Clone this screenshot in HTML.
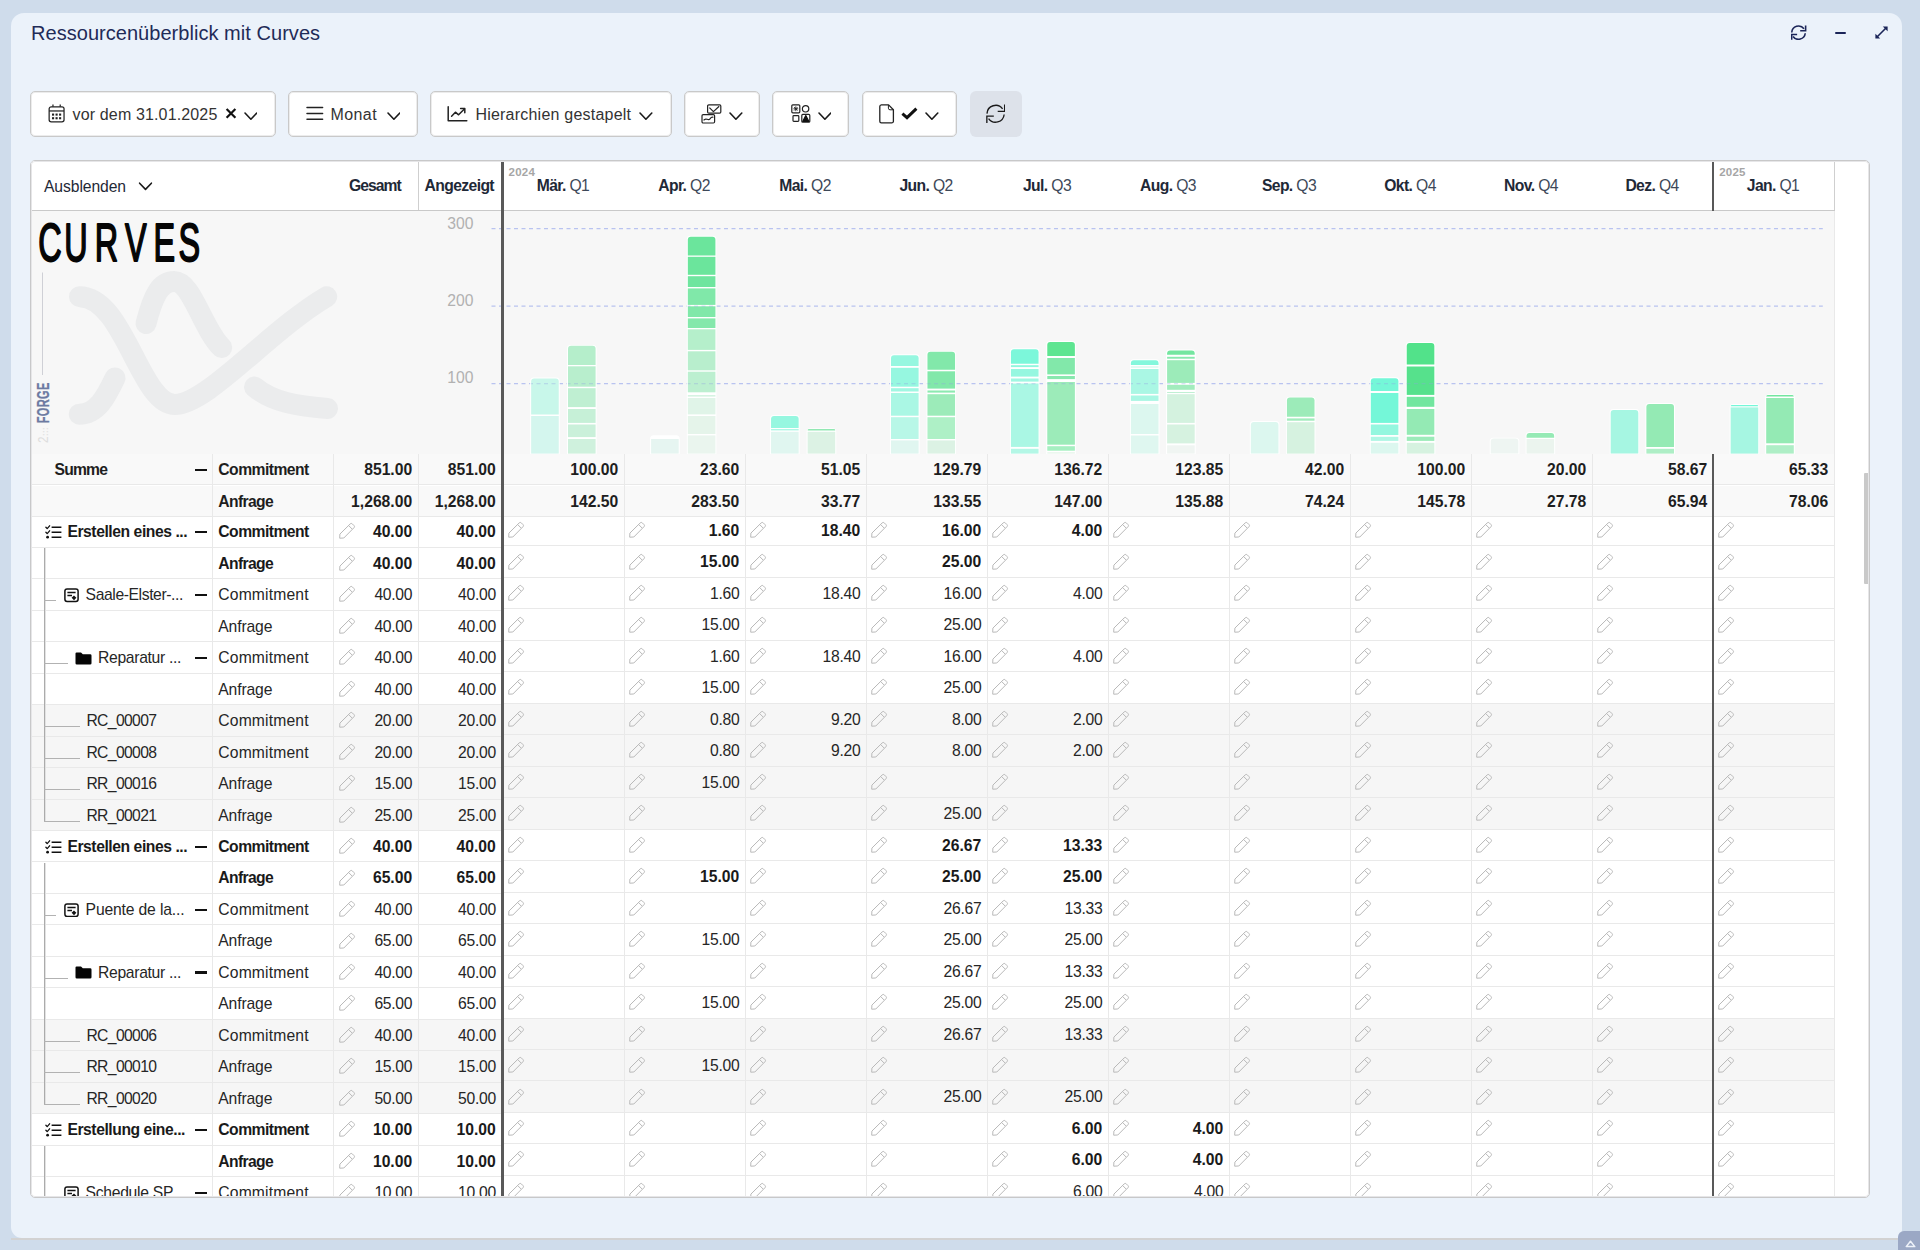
<!DOCTYPE html><html lang='de'><head><meta charset='utf-8'><title>Ressourcenüberblick mit Curves</title><style>
*{box-sizing:border-box}
html,body{margin:0;padding:0}
body{width:1920px;height:1250px;background:#cfdceb;overflow:hidden;position:relative;font-family:'Liberation Sans',sans-serif;color:#111}
.a{position:absolute}
#panel{left:11px;top:13px;width:1891px;height:1225px;background:#ebf2fa;border-radius:13px 13px 0 11px}
#pline{left:11px;top:1238px;width:1891px;height:2px;background:#d2d2d2}
#corner{left:1898px;top:1231px;width:22px;height:19px;background:#9ba8c5;border-top-left-radius:6px}
#title{left:31px;top:19px;font-size:20px;line-height:28px;color:#1f2b58;white-space:nowrap;letter-spacing:.04px}
.btn{top:91px;height:46px;background:#fff;border:1px solid #c9c9c9;border-radius:5px;box-shadow:inset 0 0 0 1px #ececec}
.btxt{top:0;height:44px;line-height:44px;font-size:16px;color:#333;white-space:nowrap}
#rbtn{left:970px;top:91px;width:51.5px;height:46px;background:#dde2ea;border-radius:6px}
#tbl{left:30px;top:160px;width:1840px;height:1037.5px;background:#fff;border:1px solid #c8c8c9;border-radius:5px;overflow:hidden}
#tin{left:0;top:0;width:1838px;height:1036px}
.hd{font-size:15.7px;line-height:18px;white-space:nowrap;color:#1f2937}
.hb{font-weight:700}
.q{color:#3d4858;font-weight:400}
.yr{font-size:11.5px;font-weight:700;color:#a6a6a6;line-height:12px;letter-spacing:.2px}
.row{left:0;width:1804px;height:31.47px;border-bottom:1px solid #e9e9e9;font-size:15.7px;line-height:31.5px;white-space:nowrap;color:#262626}
.row.sum{background:#f9f9f9;font-weight:700;color:#1e1e1e}
.row.leaf{background:#f6f6f6}
.row.b{font-weight:700;color:#1a1a1a}
.c{position:absolute;top:0;height:31.5px}
.n{position:absolute;top:0;height:31.5px;text-align:right}
.vl{width:1px;background:#e9e9e9}
.ax{font-size:15px;color:#b3b3b3;line-height:16px;text-align:right;width:40px}
</style></head><body>
<div id='panel' class='a'></div><div id='pline' class='a'></div>
<div id='corner' class='a'><svg class='a' style='left:7px;top:9px' width='11' height='8' viewBox='0 0 11 8'><path d='M5.5 1.2 L9.8 6.6 H1.2 Z' fill='none' stroke='#eef2f9' stroke-width='1.5' stroke-linejoin='round'/></svg></div>
<div id='title' class='a'>Ressourcenüberblick mit Curves</div>
<svg class='a' style='left:1791.4px;top:25.1px' width='15.3' height='15.3' viewBox='0 0 16 16' fill='none' stroke='#1b2558' stroke-width='1.65' stroke-linecap='butt' stroke-linejoin='miter'><path d='M0.8 7.9 A7.1 7.1 0 0 1 13.6 4'/><path d='M14.9 8.6 A7.1 7.1 0 0 1 2.1 12'/><path d='M15.3 0.5 V6.1 H9.6'/><path d='M0.7 15.5 V9.9 H6.4'/></svg>
<div class='a' style='left:1834.5px;top:31.8px;width:11.5px;height:1.8px;background:#1b2558;border-radius:1px'></div>
<svg class='a' style='left:1874px;top:25px' width='15' height='15' viewBox='0 0 15 15' fill='none' stroke='#1b2558' stroke-width='1.6'><path d='M2.5 12.5 L12.5 2.5'/><path d='M8.8 1.4 H13.6 V6.2 Z' fill='#1b2558' stroke='none'/><path d='M1.4 8.8 V13.6 H6.2 Z' fill='#1b2558' stroke='none'/></svg>
<div class='a btn' style='left:30.3px;width:246px'></div>
<svg class='a' style='left:47.6px;top:103.6px' width='17.2' height='19.1' viewBox='0 0 18 20' fill='none' stroke='#222' stroke-width='1.3'><rect x='1.2' y='2.9' width='15.6' height='15.9' rx='2.2'/><path d='M1.2 7.3 H16.8' stroke-width='1.3'/><path d='M5.2 0.5 V2.9 M12.8 0.5 V2.9' stroke-linecap='butt'/><g fill='#222' stroke='none'><rect x='4.2' y='10' width='2.2' height='2.2'/><rect x='7.9' y='10' width='2.2' height='2.2'/><rect x='11.6' y='10' width='2.2' height='2.2'/><rect x='4.2' y='13.8' width='2.2' height='2.2'/><rect x='7.9' y='13.8' width='2.2' height='2.2'/><rect x='11.6' y='13.8' width='2.2' height='2.2'/></g></svg>
<div class='a btxt' style='left:72.6px;top:93px;letter-spacing:.14px'>vor dem 31.01.2025</div>
<svg class='a' style='left:225px;top:108.4px' width='12' height='11' viewBox='0 0 12 11' stroke='#111' stroke-width='2.2' stroke-linecap='butt'><path d='M1.6 1 L10.4 9.8 M10.4 1 L1.6 9.8'/></svg>
<svg class='a' style='left:243.6px;top:111.9px' width='13.8' height='8.2' viewBox='-1 -1 13.8 8.2' fill='none' stroke='#1a1a1a' stroke-width='1.6' stroke-linecap='round' stroke-linejoin='round'><path d='M0 0 L5.9 6.2 L11.8 0'/></svg>
<div class='a btn' style='left:288.3px;width:129.3px'></div>
<svg class='a' style='left:305.5px;top:106px' width='18' height='15' viewBox='0 0 18 15' stroke='#222' stroke-width='1.5' stroke-linecap='round'><path d='M1 1.5 H16.6 M1 7.4 H16.6 M1 13.3 H16.6'/></svg>
<div class='a btxt' style='left:330.6px;top:93px;letter-spacing:.38px'>Monat</div>
<svg class='a' style='left:386.6px;top:111.9px' width='13.8' height='8.2' viewBox='-1 -1 13.8 8.2' fill='none' stroke='#1a1a1a' stroke-width='1.6' stroke-linecap='round' stroke-linejoin='round'><path d='M0 0 L5.9 6.2 L11.8 0'/></svg>
<div class='a btn' style='left:430px;width:241.7px'></div>
<svg class='a' style='left:447px;top:105.5px' width='21' height='16' viewBox='0 0 21 16' fill='none' stroke='#222' stroke-width='1.5' stroke-linecap='round' stroke-linejoin='round'><path d='M1.2 0.8 V14.8 H19.8'/><path d='M4.6 10.2 L8.4 6.2 L11.6 8.8 L17.4 3'/><path d='M13.6 2.6 H17.8 V6.8'/></svg>
<div class='a btxt' style='left:475.4px;top:93px;letter-spacing:.22px'>Hierarchien gestapelt</div>
<svg class='a' style='left:639.4px;top:111.9px' width='13.8' height='8.2' viewBox='-1 -1 13.8 8.2' fill='none' stroke='#1a1a1a' stroke-width='1.6' stroke-linecap='round' stroke-linejoin='round'><path d='M0 0 L5.9 6.2 L11.8 0'/></svg>
<div class='a btn' style='left:684.1px;width:75.9px'></div>
<svg class='a' style='left:701px;top:103.5px' width='21' height='20' viewBox='0 0 21 20' fill='#fff' stroke='#222' stroke-width='1.2' stroke-linejoin='round'><rect x='6.6' y='0.8' width='13.2' height='8.4' rx='1.2'/><path d='M8.4 3.6 L12.4 7.6 L18.2 2.2' fill='none'/><rect x='1' y='10.6' width='12.6' height='8.4' rx='1.2'/><path d='M2.6 16.4 C5 12.6 7 17.6 9 14.8 S11.6 13.4 12.4 13.2' fill='none'/></svg>
<svg class='a' style='left:729.2px;top:111.9px' width='13.8' height='8.2' viewBox='-1 -1 13.8 8.2' fill='none' stroke='#1a1a1a' stroke-width='1.6' stroke-linecap='round' stroke-linejoin='round'><path d='M0 0 L5.9 6.2 L11.8 0'/></svg>
<div class='a btn' style='left:772.1px;width:77.4px'></div>
<svg class='a' style='left:790.6px;top:104px' width='20' height='19' viewBox='0 0 20 19' fill='none' stroke='#222' stroke-width='1.2' stroke-linejoin='round'><rect x='0.8' y='0.8' width='8' height='8' rx='1'/><path d='M4.8 2.4 V7.2 M2.4 4.8 H7.2 M3.1 3.1 L6.5 6.5 M6.5 3.1 L3.1 6.5' stroke-width='.9'/><circle cx='14.6' cy='4.8' r='3.2'/><rect x='2' y='11.6' width='5.8' height='5.8' rx='.8'/><rect x='10.8' y='10.4' width='8' height='7.8' rx='1'/><path d='M14.8 11.6 L17.8 17.4 H11.8 Z' fill='#111' stroke='#111'/></svg>
<svg class='a' style='left:817.6px;top:111.9px' width='13.8' height='8.2' viewBox='-1 -1 13.8 8.2' fill='none' stroke='#1a1a1a' stroke-width='1.6' stroke-linecap='round' stroke-linejoin='round'><path d='M0 0 L5.9 6.2 L11.8 0'/></svg>
<div class='a btn' style='left:862.2px;width:95.3px'></div>
<svg class='a' style='left:879.3px;top:103.5px' width='16' height='20' viewBox='0 0 16 20' fill='none' stroke='#222' stroke-width='1.3' stroke-linejoin='round'><path d='M2.4 0.9 H9.6 L14.4 5.7 V17.2 A1.7 1.7 0 0 1 12.7 18.9 H2.4 A1.7 1.7 0 0 1 0.8 17.2 V2.6 A1.7 1.7 0 0 1 2.4 0.9 Z'/><path d='M9.4 1 V4.2 A1.6 1.6 0 0 0 11 5.8 H14.2' stroke-width='1'/></svg>
<svg class='a' style='left:901.4px;top:106.8px' width='17' height='13' viewBox='0 0 17 13' fill='none' stroke='#111' stroke-width='3' stroke-linejoin='miter'><path d='M1.4 6.6 L6 10.6 L15.4 1.6'/></svg>
<svg class='a' style='left:925.4px;top:111.9px' width='13.8' height='8.2' viewBox='-1 -1 13.8 8.2' fill='none' stroke='#1a1a1a' stroke-width='1.6' stroke-linecap='round' stroke-linejoin='round'><path d='M0 0 L5.9 6.2 L11.8 0'/></svg>
<div id='rbtn' class='a'></div>
<svg class='a' style='left:985.9px;top:103.6px' width='19.5' height='19.5' viewBox='0 0 16 16' fill='none' stroke='#1a1a1a' stroke-width='1.1' stroke-linecap='butt' stroke-linejoin='miter'><path d='M0.8 7.9 A7.1 7.1 0 0 1 13.6 4'/><path d='M14.9 8.6 A7.1 7.1 0 0 1 2.1 12'/><path d='M15.3 0.5 V6.1 H9.6'/><path d='M0.7 15.5 V9.9 H6.4'/></svg><div id='tbl' class='a'><div id='tin' class='a'>
<div class='a' style='left:0;top:0;width:1804px;height:50px;background:#fff;border-bottom:1px solid #c9c9c9'></div>
<div class='a hd' style='left:13px;top:16.6px;letter-spacing:-.09px'>Ausblenden</div>
<svg class='a' style='left:107px;top:21px' width='15' height='9' viewBox='-1 -1 15 9' fill='none' stroke='#1a1a1a' stroke-width='1.6' stroke-linecap='round' stroke-linejoin='round'><path d='M0.6 0.2 L6.5 6.4 L12.4 0.2'/></svg>
<div class='a hd hb' style='left:318px;top:16.2px;letter-spacing:-.94px'>Gesamt</div>
<div class='a hd hb' style='left:393.6px;top:16.2px;letter-spacing:-.62px'>Angezeigt</div>
<div class='a hd' style='left:472px;width:120px;text-align:center;top:16.2px;letter-spacing:-.62px'><span class='hb'>Mär.</span> <span class='q'>Q1</span></div>
<div class='a hd' style='left:593px;width:120px;text-align:center;top:16.2px;letter-spacing:-.62px'><span class='hb'>Apr.</span> <span class='q'>Q2</span></div>
<div class='a hd' style='left:714px;width:120px;text-align:center;top:16.2px;letter-spacing:-.62px'><span class='hb'>Mai.</span> <span class='q'>Q2</span></div>
<div class='a hd' style='left:835px;width:120px;text-align:center;top:16.2px;letter-spacing:-.62px'><span class='hb'>Jun.</span> <span class='q'>Q2</span></div>
<div class='a hd' style='left:956px;width:120px;text-align:center;top:16.2px;letter-spacing:-.62px'><span class='hb'>Jul.</span> <span class='q'>Q3</span></div>
<div class='a hd' style='left:1077px;width:120px;text-align:center;top:16.2px;letter-spacing:-.62px'><span class='hb'>Aug.</span> <span class='q'>Q3</span></div>
<div class='a hd' style='left:1198px;width:120px;text-align:center;top:16.2px;letter-spacing:-.62px'><span class='hb'>Sep.</span> <span class='q'>Q3</span></div>
<div class='a hd' style='left:1319px;width:120px;text-align:center;top:16.2px;letter-spacing:-.62px'><span class='hb'>Okt.</span> <span class='q'>Q4</span></div>
<div class='a hd' style='left:1440px;width:120px;text-align:center;top:16.2px;letter-spacing:-.62px'><span class='hb'>Nov.</span> <span class='q'>Q4</span></div>
<div class='a hd' style='left:1561px;width:120px;text-align:center;top:16.2px;letter-spacing:-.62px'><span class='hb'>Dez.</span> <span class='q'>Q4</span></div>
<div class='a hd' style='left:1682px;width:120px;text-align:center;top:16.2px;letter-spacing:-.62px'><span class='hb'>Jan.</span> <span class='q'>Q1</span></div>
<div class='a yr' style='left:477.6px;top:5.3px'>2024</div>
<div class='a yr' style='left:1688.2px;top:5.3px'>2025</div>
<div class='a' style='left:387px;top:0;width:1px;height:49px;background:#cfcfcf'></div>
<div class='a' style='left:1803px;top:0;width:1px;height:49px;background:#cfcfcf'></div>
<div class='a' style='left:0;top:50px;width:1804px;height:243px;background:#f7f7f7'></div><svg class='a' style='left:0;top:50px' width='1804' height='243' viewBox='31 211 1804 243'>
<g fill='none' stroke='#ebeced' stroke-width='21' stroke-linecap='round' stroke-linejoin='round'><path d='M79.5 296.7 C124 296.7 140 404.5 175 404.5 C207 404.5 270 330 326.7 296.7'/><path d='M146 323.5 C153 296 160 281.5 174.2 281.5 C192 281.5 203 330 221.7 347.5'/><path d='M79.2 414.2 C97 414.2 106 397 115 378'/><path d='M254.5 387 C272 402 297 406 327.5 408.5'/></g>
<text x='1.0 44.3 95.2 145.8 193.1 235.0' y='0' transform='translate(37.6 260.8) scale(0.6 1)' font-family="'Liberation Sans',sans-serif" font-weight='400' font-size='54' fill='#050505' stroke='#050505' stroke-width='1.6' stroke-linejoin='round' vector-effect='non-scaling-stroke' style='vector-effect:non-scaling-stroke'>CURVES</text>
<path d='M42.5 272.5 V375' stroke='#cfd0d6' stroke-width='1'/>
<text transform='translate(48.6 423.2) rotate(-90) scale(0.70 1)' font-family="'Liberation Sans',sans-serif" font-weight='700' font-size='15.7' letter-spacing='.5' fill='#6c7aa1' stroke='#6c7aa1' stroke-width='.3'>FORGE</text>
<text transform='translate(48.4 443) rotate(-90) scale(0.8 1)' font-family="'Liberation Sans',sans-serif" font-weight='400' font-size='14.6' fill='#dedede'>2</text>
<text transform='translate(47.6 436) rotate(-90)' font-family="'Liberation Sans',sans-serif" font-weight='700' font-size='9' fill='#e4e4e4'>:::</text>
<text x='473.4' y='228.9' text-anchor='end' font-family="'Liberation Sans',sans-serif" font-size='15.7' fill='#b1b1b1'>300</text>
<text x='473.4' y='305.7' text-anchor='end' font-family="'Liberation Sans',sans-serif" font-size='15.7' fill='#b1b1b1'>200</text>
<text x='473.4' y='382.5' text-anchor='end' font-family="'Liberation Sans',sans-serif" font-size='15.7' fill='#b1b1b1'>100</text>
<path d='M491.5 228.6 H1822.8' stroke='#b9c3f0' stroke-width='1.3' stroke-dasharray='4 3.5'/>
<path d='M491.5 306.2 H1822.8' stroke='#b9c3f0' stroke-width='1.3' stroke-dasharray='4 3.5'/>
<path d='M491.5 383.7 H1822.8' stroke='#b9c3f0' stroke-width='1.3' stroke-dasharray='4 3.5'/>
<path d='M530.15 454 V381.2 Q530.15 377.6 533.75 377.6 H556.15 Q559.75 377.6 559.75 381.2 V454 Z' fill='#fff'/><path d='M531.15 414.4 V381.5 Q531.15 378.5 534.15 378.5 H555.75 Q558.75 378.5 558.75 381.5 V414.4 Z' fill='#c8f7ea'/><rect x='531.15' y='416' width='27.6' height='37.6' fill='#d4f6ee'/>
<path d='M567 454 V348.5 Q567 344.9 570.6 344.9 H593 Q596.6 344.9 596.6 348.5 V454 Z' fill='#fff'/><path d='M568 364.9 V348.8 Q568 345.8 571 345.8 H592.6 Q595.6 345.8 595.6 348.8 V364.9 Z' fill='#b5eecb'/><rect x='568' y='366.3' width='27.6' height='20.4' fill='#b8eecd'/><rect x='568' y='388.2' width='27.6' height='18.9' fill='#bfefd2'/><rect x='568' y='409' width='27.6' height='13.9' fill='#c6f0d7'/><rect x='568' y='424.5' width='27.6' height='12.6' fill='#caf0da'/><rect x='568' y='439' width='27.6' height='14.6' fill='#cff1dd'/>
<path d='M650.1 454 V438.9 Q650.1 435.3 653.7 435.3 H676.1 Q679.7 435.3 679.7 438.9 V454 Z' fill='#fff'/><path d='M651.1 438 V438 Q651.1 436.2 652.9 436.2 H676.9 Q678.7 436.2 678.7 438 V438 Z' fill='#ffffff'/><rect x='651.1' y='439' width='27.6' height='14.6' fill='#e6f5f1'/>
<path d='M686.82 454 V239.4 Q686.82 235.8 690.42 235.8 H712.82 Q716.42 235.8 716.42 239.4 V454 Z' fill='#fff'/><path d='M687.82 255.4 V239.7 Q687.82 236.7 690.82 236.7 H712.42 Q715.42 236.7 715.42 239.7 V255.4 Z' fill='#6be59c'/><rect x='687.82' y='256.8' width='27.6' height='18' fill='#6be59c'/><rect x='687.82' y='276.2' width='27.6' height='10.8' fill='#6fe59f'/><rect x='687.82' y='288.4' width='27.6' height='16.5' fill='#80e8a9'/><rect x='687.82' y='306.3' width='27.6' height='10.7' fill='#80e8a9'/><rect x='687.82' y='318.4' width='27.6' height='9.6' fill='#84e8ab'/><rect x='687.82' y='329.3' width='27.6' height='20.6' fill='#b5efcb'/><rect x='687.82' y='351.3' width='27.6' height='19' fill='#b8eecd'/><rect x='687.82' y='371.7' width='27.6' height='20.6' fill='#bcefd0'/><rect x='687.82' y='395.2' width='27.6' height='1.3' fill='#cdf1db'/><rect x='687.82' y='398' width='27.6' height='16.4' fill='#e0f4e8'/><rect x='687.82' y='416' width='27.6' height='18' fill='#e5f4ea'/><rect x='687.82' y='435.4' width='27.6' height='18.2' fill='#eaf5ee'/>
<path d='M770.05 454 V418.6 Q770.05 415 773.65 415 H796.05 Q799.65 415 799.65 418.6 V454 Z' fill='#fff'/><path d='M771.05 428 V418.9 Q771.05 415.9 774.05 415.9 H795.65 Q798.65 415.9 798.65 418.9 V428 Z' fill='#96f7e0'/><rect x='771.05' y='429.1' width='27.6' height='1.3' fill='#a8f7e3'/><rect x='771.05' y='431.8' width='27.6' height='21.8' fill='#e0f6f0'/>
<path d='M806.64 454 V431.8 Q806.64 428.2 810.24 428.2 H832.64 Q836.24 428.2 836.24 431.8 V454 Z' fill='#fff'/><path d='M807.64 430.4 V430.4 Q807.64 429.1 808.94 429.1 H833.94 Q835.24 429.1 835.24 430.4 V430.4 Z' fill='#92e8b3'/><rect x='807.64' y='431.8' width='27.6' height='21.8' fill='#dcf2e4'/>
<path d='M890 454 V357.9 Q890 354.3 893.6 354.3 H916 Q919.6 354.3 919.6 357.9 V454 Z' fill='#fff'/><path d='M891 365.9 V358.2 Q891 355.2 894 355.2 H915.6 Q918.6 355.2 918.6 358.2 V365.9 Z' fill='#96f7e0'/><rect x='891' y='367.8' width='27.6' height='18.9' fill='#96f7e0'/><rect x='891' y='388.2' width='27.6' height='3.3' fill='#a0f7e2'/><rect x='891' y='393' width='27.6' height='22.7' fill='#aaf7e4'/><rect x='891' y='417.2' width='27.6' height='21.8' fill='#b8f7e7'/><rect x='891' y='440.4' width='27.6' height='13.2' fill='#e0f6f0'/>
<path d='M926.46 454 V354.5 Q926.46 350.9 930.06 350.9 H952.46 Q956.06 350.9 956.06 354.5 V454 Z' fill='#fff'/><path d='M927.46 369.7 V354.8 Q927.46 351.8 930.46 351.8 H952.06 Q955.06 351.8 955.06 354.8 V369.7 Z' fill='#82e8aa'/><rect x='927.46' y='371.3' width='27.6' height='17.3' fill='#82e8aa'/><rect x='927.46' y='390.5' width='27.6' height='2.1' fill='#8ceab0'/><rect x='927.46' y='394.2' width='27.6' height='21.5' fill='#9cebb9'/><rect x='927.46' y='417.2' width='27.6' height='21.8' fill='#aef0c6'/><rect x='927.46' y='440.4' width='27.6' height='13.2' fill='#dcf2e4'/>
<path d='M1009.95 454 V351.9 Q1009.95 348.3 1013.55 348.3 H1035.95 Q1039.55 348.3 1039.55 351.9 V454 Z' fill='#fff'/><path d='M1010.95 363.7 V352.2 Q1010.95 349.2 1013.95 349.2 H1035.55 Q1038.55 349.2 1038.55 352.2 V363.7 Z' fill='#7cf7da'/><rect x='1010.95' y='365.2' width='27.6' height='1.9' fill='#90f7de'/><rect x='1010.95' y='369' width='27.6' height='7.6' fill='#96f7e0'/><rect x='1010.95' y='378.5' width='27.6' height='3.1' fill='#a0f7e2'/><rect x='1010.95' y='383.5' width='27.6' height='63.4' fill='#aaf7e4'/><rect x='1010.95' y='448.8' width='27.6' height='4.8' fill='#b4f7e6'/>
<path d='M1046.28 454 V344.6 Q1046.28 341 1049.88 341 H1072.28 Q1075.88 341 1075.88 344.6 V454 Z' fill='#fff'/><path d='M1047.28 356 V344.9 Q1047.28 341.9 1050.28 341.9 H1071.88 Q1074.88 341.9 1074.88 344.9 V356 Z' fill='#5ee591'/><rect x='1047.28' y='358' width='27.6' height='16.4' fill='#82e8aa'/><rect x='1047.28' y='376' width='27.6' height='3.1' fill='#88e8ae'/><rect x='1047.28' y='382' width='27.6' height='62.7' fill='#9cebb9'/><rect x='1047.28' y='446.2' width='27.6' height='4.5' fill='#a6efc1'/><rect x='1047.28' y='452.2' width='27.6' height='1.4' fill='#e8f5ec'/>
<path d='M1129.9 454 V362.9 Q1129.9 359.3 1133.5 359.3 H1155.9 Q1159.5 359.3 1159.5 362.9 V454 Z' fill='#fff'/><path d='M1130.9 365 V363.2 Q1130.9 360.2 1133.9 360.2 H1155.5 Q1158.5 360.2 1158.5 363.2 V365 Z' fill='#84f7dc'/><rect x='1130.9' y='366.5' width='27.6' height='1' fill='#c8f7ea'/><rect x='1130.9' y='369' width='27.6' height='24.9' fill='#aaf7e4'/><rect x='1130.9' y='395.5' width='27.6' height='5.4' fill='#aaf7e4'/><rect x='1130.9' y='404' width='27.6' height='30' fill='#dcf7ef'/><rect x='1130.9' y='435.5' width='27.6' height='18.1' fill='#dff7f0'/>
<path d='M1166.1 454 V353.2 Q1166.1 349.6 1169.7 349.6 H1192.1 Q1195.7 349.6 1195.7 353.2 V454 Z' fill='#fff'/><path d='M1167.1 354.8 V353.5 Q1167.1 350.5 1170.1 350.5 H1191.7 Q1194.7 350.5 1194.7 353.5 V354.8 Z' fill='#74e6a0'/><rect x='1167.1' y='356.8' width='27.6' height='1.9' fill='#88e9ae'/><rect x='1167.1' y='360.2' width='27.6' height='22.7' fill='#9cebb9'/><rect x='1167.1' y='384.8' width='27.6' height='5' fill='#a2ecbd'/><rect x='1167.1' y='392' width='27.6' height='1' fill='#c0f0d3'/><rect x='1167.1' y='394.2' width='27.6' height='28.7' fill='#d4f2df'/><rect x='1167.1' y='424.5' width='27.6' height='18.9' fill='#d6f2e0'/><rect x='1167.1' y='445.3' width='27.6' height='8.3' fill='#f0f5f2'/>
<path d='M1249.85 454 V424.7 Q1249.85 421.1 1253.45 421.1 H1275.85 Q1279.45 421.1 1279.45 424.7 V454 Z' fill='#fff'/><path d='M1250.85 453.6 V425 Q1250.85 422 1253.85 422 H1275.45 Q1278.45 422 1278.45 425 V453.6 Z' fill='#dcf7ef'/>
<path d='M1285.92 454 V400.3 Q1285.92 396.7 1289.52 396.7 H1311.92 Q1315.52 396.7 1315.52 400.3 V454 Z' fill='#fff'/><path d='M1286.92 416.7 V400.6 Q1286.92 397.6 1289.92 397.6 H1311.52 Q1314.52 397.6 1314.52 400.6 V416.7 Z' fill='#9cebb9'/><rect x='1286.92' y='418.4' width='27.6' height='2.3' fill='#a2ecbd'/><rect x='1286.92' y='422.2' width='27.6' height='31.4' fill='#d6f2e0'/>
<path d='M1369.8 454 V380.9 Q1369.8 377.3 1373.4 377.3 H1395.8 Q1399.4 377.3 1399.4 380.9 V454 Z' fill='#fff'/><path d='M1370.8 391.1 V381.2 Q1370.8 378.2 1373.8 378.2 H1395.4 Q1398.4 378.2 1398.4 381.2 V391.1 Z' fill='#74f7d8'/><rect x='1370.8' y='393' width='27.6' height='29.9' fill='#74f7d8'/><rect x='1370.8' y='424.5' width='27.6' height='10.5' fill='#94f7df'/><rect x='1370.8' y='436.8' width='27.6' height='4.1' fill='#b0f7e5'/><rect x='1370.8' y='442.8' width='27.6' height='10.8' fill='#dcf7ef'/>
<path d='M1405.74 454 V345.6 Q1405.74 342 1409.34 342 H1431.74 Q1435.34 342 1435.34 345.6 V454 Z' fill='#fff'/><path d='M1406.74 364.6 V345.9 Q1406.74 342.9 1409.74 342.9 H1431.34 Q1434.34 342.9 1434.34 345.9 V364.6 Z' fill='#52e28a'/><rect x='1406.74' y='366.5' width='27.6' height='28.4' fill='#56e18c'/><rect x='1406.74' y='396.8' width='27.6' height='10' fill='#72e69f'/><rect x='1406.74' y='409' width='27.6' height='25.8' fill='#94eab4'/><rect x='1406.74' y='436.7' width='27.6' height='4.2' fill='#9cebb9'/><rect x='1406.74' y='442.8' width='27.6' height='10.8' fill='#d6f2e0'/>
<path d='M1489.75 454 V441.3 Q1489.75 437.7 1493.35 437.7 H1515.75 Q1519.35 437.7 1519.35 441.3 V454 Z' fill='#fff'/><path d='M1490.75 453.6 V441.6 Q1490.75 438.6 1493.75 438.6 H1515.35 Q1518.35 438.6 1518.35 441.6 V453.6 Z' fill='#eef5f2'/>
<path d='M1525.56 454 V435.6 Q1525.56 432 1529.16 432 H1551.56 Q1555.16 432 1555.16 435.6 V454 Z' fill='#fff'/><path d='M1526.56 437.7 V435.9 Q1526.56 432.9 1529.56 432.9 H1551.16 Q1554.16 432.9 1554.16 435.9 V437.7 Z' fill='#96eab5'/><rect x='1526.56' y='439' width='27.6' height='14.6' fill='#ebf4ee'/>
<path d='M1609.7 454 V412.6 Q1609.7 409 1613.3 409 H1635.7 Q1639.3 409 1639.3 412.6 V454 Z' fill='#fff'/><path d='M1610.7 453.6 V412.9 Q1610.7 409.9 1613.7 409.9 H1635.3 Q1638.3 409.9 1638.3 412.9 V453.6 Z' fill='#a6f6e2'/>
<path d='M1645.38 454 V406.7 Q1645.38 403.1 1648.98 403.1 H1671.38 Q1674.98 403.1 1674.98 406.7 V454 Z' fill='#fff'/><path d='M1646.38 447 V407 Q1646.38 404 1649.38 404 H1670.98 Q1673.98 404 1673.98 407 V447 Z' fill='#94eab4'/><rect x='1646.38' y='448.8' width='27.6' height='4.8' fill='#aeeec6'/>
<path d='M1729.65 454 V407.7 Q1729.65 404.1 1733.25 404.1 H1755.65 Q1759.25 404.1 1759.25 407.7 V454 Z' fill='#fff'/><path d='M1730.65 406.3 V406.3 Q1730.65 405 1731.95 405 H1756.95 Q1758.25 405 1758.25 406.3 V406.3 Z' fill='#74f7d8'/><rect x='1730.65' y='407.4' width='27.6' height='46.2' fill='#a6f6e2'/>
<path d='M1765.2 454 V397.8 Q1765.2 394.2 1768.8 394.2 H1791.2 Q1794.8 394.2 1794.8 397.8 V454 Z' fill='#fff'/><path d='M1766.2 396.6 V396.6 Q1766.2 395.1 1767.7 395.1 H1792.3 Q1793.8 395.1 1793.8 396.6 V396.6 Z' fill='#74e6a0'/><rect x='1766.2' y='398' width='27.6' height='45.3' fill='#94eab4'/><rect x='1766.2' y='445.2' width='27.6' height='8.4' fill='#aeeec6'/>
<path d='M531.15 383.7 H558.75' stroke='#8fa0e0' stroke-opacity='.33' stroke-width='1.3' stroke-dasharray='4 3.5' stroke-dashoffset='2.15'/>
<path d='M568 383.7 H595.6' stroke='#8fa0e0' stroke-opacity='.33' stroke-width='1.3' stroke-dasharray='4 3.5' stroke-dashoffset='1.5'/>
<path d='M687.82 306.2 H715.42' stroke='#8fa0e0' stroke-opacity='.33' stroke-width='1.3' stroke-dasharray='4 3.5' stroke-dashoffset='1.32'/>
<path d='M687.82 383.7 H715.42' stroke='#8fa0e0' stroke-opacity='.33' stroke-width='1.3' stroke-dasharray='4 3.5' stroke-dashoffset='1.32'/>
<path d='M891 383.7 H918.6' stroke='#8fa0e0' stroke-opacity='.33' stroke-width='1.3' stroke-dasharray='4 3.5' stroke-dashoffset='2'/>
<path d='M927.46 383.7 H955.06' stroke='#8fa0e0' stroke-opacity='.33' stroke-width='1.3' stroke-dasharray='4 3.5' stroke-dashoffset='0.96'/>
<path d='M1010.95 383.7 H1038.55' stroke='#8fa0e0' stroke-opacity='.33' stroke-width='1.3' stroke-dasharray='4 3.5' stroke-dashoffset='1.95'/>
<path d='M1047.28 383.7 H1074.88' stroke='#8fa0e0' stroke-opacity='.33' stroke-width='1.3' stroke-dasharray='4 3.5' stroke-dashoffset='0.78'/>
<path d='M1130.9 383.7 H1158.5' stroke='#8fa0e0' stroke-opacity='.33' stroke-width='1.3' stroke-dasharray='4 3.5' stroke-dashoffset='1.9'/>
<path d='M1167.1 383.7 H1194.7' stroke='#8fa0e0' stroke-opacity='.33' stroke-width='1.3' stroke-dasharray='4 3.5' stroke-dashoffset='0.6'/>
<path d='M1370.8 383.7 H1398.4' stroke='#8fa0e0' stroke-opacity='.33' stroke-width='1.3' stroke-dasharray='4 3.5' stroke-dashoffset='1.8'/>
<path d='M1406.74 383.7 H1434.34' stroke='#8fa0e0' stroke-opacity='.33' stroke-width='1.3' stroke-dasharray='4 3.5' stroke-dashoffset='0.24'/>
</svg><div class='a' style='left:0;top:292.5px;width:1804px;height:1px;background:#e9e9e9'></div>
<div class='a row sum' style='top:293px;width:471px;overflow:hidden'><span class='c' style='left:23.6px;letter-spacing:-.84px'>Summe</span><span class='a' style='left:164px;top:14.6px;width:12px;height:2.2px;background:#111'></span><span class='c' style='left:187.3px;letter-spacing:-0.54px'>Commitment</span><span class='n' style='right:89.8px;letter-spacing:0.01px'>851.00</span><span class='n' style='right:6.2px;letter-spacing:0.01px'>851.00</span></div><div class='a row sum' style='top:293px;left:471px;width:1333px;overflow:hidden'><span class='n' style='right:1216.7px;letter-spacing:0.01px'>100.00</span><span class='n' style='right:1095.7px;letter-spacing:0.01px'>23.60</span><span class='n' style='right:974.7px;letter-spacing:0.01px'>51.05</span><span class='n' style='right:853.7px;letter-spacing:0.01px'>129.79</span><span class='n' style='right:732.7px;letter-spacing:0.01px'>136.72</span><span class='n' style='right:611.7px;letter-spacing:0.01px'>123.85</span><span class='n' style='right:490.7px;letter-spacing:0.01px'>42.00</span><span class='n' style='right:369.7px;letter-spacing:0.01px'>100.00</span><span class='n' style='right:248.7px;letter-spacing:0.01px'>20.00</span><span class='n' style='right:127.7px;letter-spacing:0.01px'>58.67</span><span class='n' style='right:6.7px;letter-spacing:0.01px'>65.33</span></div>
<div class='a row sum' style='top:324.5px;width:471px;overflow:hidden'><span class='c' style='left:187.3px;letter-spacing:-0.64px'>Anfrage</span><span class='n' style='right:89.8px;letter-spacing:0.01px'>1,268.00</span><span class='n' style='right:6.2px;letter-spacing:0.01px'>1,268.00</span></div><div class='a row sum' style='top:324.5px;left:471px;width:1333px;overflow:hidden'><span class='n' style='right:1216.7px;letter-spacing:0.01px'>142.50</span><span class='n' style='right:1095.7px;letter-spacing:0.01px'>283.50</span><span class='n' style='right:974.7px;letter-spacing:0.01px'>33.77</span><span class='n' style='right:853.7px;letter-spacing:0.01px'>133.55</span><span class='n' style='right:732.7px;letter-spacing:0.01px'>147.00</span><span class='n' style='right:611.7px;letter-spacing:0.01px'>135.88</span><span class='n' style='right:490.7px;letter-spacing:0.01px'>74.24</span><span class='n' style='right:369.7px;letter-spacing:0.01px'>145.78</span><span class='n' style='right:248.7px;letter-spacing:0.01px'>27.78</span><span class='n' style='right:127.7px;letter-spacing:0.01px'>65.94</span><span class='n' style='right:6.7px;letter-spacing:0.01px'>78.06</span></div>
<div class='a' style='left:0;top:355.5px;width:1804px;height:680.5px;overflow:hidden'><div class='a' style='left:0;top:-355.5px;width:1804px;height:1100px'>
<div class='a row b' style='top:355.3px;width:471px;overflow:hidden'><svg class='a' style='left:14.2px;top:8.6px' width='18' height='14' viewBox='0 0 18 14' fill='none' stroke='#111' stroke-width='1.5' stroke-linecap='round'><path d='M6.6 2.2 H16.4 M6.6 7.2 H16.4 M6.6 12.2 H16.4' stroke-linecap='butt'/><path d='M0.9 2.2 L2.2 3.6 L4.6 0.8 M0.9 7.2 L2.2 8.6 L4.6 5.8' stroke-width='1.3' stroke-linejoin='round'/><circle cx='2.6' cy='12.2' r='1.4' fill='#111' stroke='none'/></svg><span class='c' style='left:36.4px;letter-spacing:-0.44px'>Erstellen eines ...</span><span class='a' style='left:164px;top:14.6px;width:12px;height:2.2px;background:#111'></span><span class='c' style='left:187.3px;letter-spacing:-0.54px'>Commitment</span><span class='n' style='right:89.8px;letter-spacing:0.01px'>40.00</span><span class='n' style='right:6.2px;letter-spacing:0.01px'>40.00</span><svg class='a' style='left:307.6px;top:6.1px' width='17' height='17' viewBox='0 0 17 17' fill='none' stroke='#b9b9b9' stroke-width='1' stroke-linejoin='miter'><path d='M0.7 16.2 L0.9 12.1 L11.2 1.9 a1.5 1.5 0 0 1 2.1 0 L15 3.6 a1.5 1.5 0 0 1 0 2.1 L4.8 16 Z'/><path d='M9.8 3.7 L13.1 7'/></svg></div><div class='a row b' style='top:354px;left:471px;width:1333px;overflow:hidden'><svg class='a' style='left:5.8px;top:6.1px' width='17' height='17' viewBox='0 0 17 17' fill='none' stroke='#b9b9b9' stroke-width='1' stroke-linejoin='miter'><path d='M0.7 16.2 L0.9 12.1 L11.2 1.9 a1.5 1.5 0 0 1 2.1 0 L15 3.6 a1.5 1.5 0 0 1 0 2.1 L4.8 16 Z'/><path d='M9.8 3.7 L13.1 7'/></svg><svg class='a' style='left:126.8px;top:6.1px' width='17' height='17' viewBox='0 0 17 17' fill='none' stroke='#b9b9b9' stroke-width='1' stroke-linejoin='miter'><path d='M0.7 16.2 L0.9 12.1 L11.2 1.9 a1.5 1.5 0 0 1 2.1 0 L15 3.6 a1.5 1.5 0 0 1 0 2.1 L4.8 16 Z'/><path d='M9.8 3.7 L13.1 7'/></svg><svg class='a' style='left:247.8px;top:6.1px' width='17' height='17' viewBox='0 0 17 17' fill='none' stroke='#b9b9b9' stroke-width='1' stroke-linejoin='miter'><path d='M0.7 16.2 L0.9 12.1 L11.2 1.9 a1.5 1.5 0 0 1 2.1 0 L15 3.6 a1.5 1.5 0 0 1 0 2.1 L4.8 16 Z'/><path d='M9.8 3.7 L13.1 7'/></svg><svg class='a' style='left:368.8px;top:6.1px' width='17' height='17' viewBox='0 0 17 17' fill='none' stroke='#b9b9b9' stroke-width='1' stroke-linejoin='miter'><path d='M0.7 16.2 L0.9 12.1 L11.2 1.9 a1.5 1.5 0 0 1 2.1 0 L15 3.6 a1.5 1.5 0 0 1 0 2.1 L4.8 16 Z'/><path d='M9.8 3.7 L13.1 7'/></svg><svg class='a' style='left:489.8px;top:6.1px' width='17' height='17' viewBox='0 0 17 17' fill='none' stroke='#b9b9b9' stroke-width='1' stroke-linejoin='miter'><path d='M0.7 16.2 L0.9 12.1 L11.2 1.9 a1.5 1.5 0 0 1 2.1 0 L15 3.6 a1.5 1.5 0 0 1 0 2.1 L4.8 16 Z'/><path d='M9.8 3.7 L13.1 7'/></svg><svg class='a' style='left:610.8px;top:6.1px' width='17' height='17' viewBox='0 0 17 17' fill='none' stroke='#b9b9b9' stroke-width='1' stroke-linejoin='miter'><path d='M0.7 16.2 L0.9 12.1 L11.2 1.9 a1.5 1.5 0 0 1 2.1 0 L15 3.6 a1.5 1.5 0 0 1 0 2.1 L4.8 16 Z'/><path d='M9.8 3.7 L13.1 7'/></svg><svg class='a' style='left:731.8px;top:6.1px' width='17' height='17' viewBox='0 0 17 17' fill='none' stroke='#b9b9b9' stroke-width='1' stroke-linejoin='miter'><path d='M0.7 16.2 L0.9 12.1 L11.2 1.9 a1.5 1.5 0 0 1 2.1 0 L15 3.6 a1.5 1.5 0 0 1 0 2.1 L4.8 16 Z'/><path d='M9.8 3.7 L13.1 7'/></svg><svg class='a' style='left:852.8px;top:6.1px' width='17' height='17' viewBox='0 0 17 17' fill='none' stroke='#b9b9b9' stroke-width='1' stroke-linejoin='miter'><path d='M0.7 16.2 L0.9 12.1 L11.2 1.9 a1.5 1.5 0 0 1 2.1 0 L15 3.6 a1.5 1.5 0 0 1 0 2.1 L4.8 16 Z'/><path d='M9.8 3.7 L13.1 7'/></svg><svg class='a' style='left:973.8px;top:6.1px' width='17' height='17' viewBox='0 0 17 17' fill='none' stroke='#b9b9b9' stroke-width='1' stroke-linejoin='miter'><path d='M0.7 16.2 L0.9 12.1 L11.2 1.9 a1.5 1.5 0 0 1 2.1 0 L15 3.6 a1.5 1.5 0 0 1 0 2.1 L4.8 16 Z'/><path d='M9.8 3.7 L13.1 7'/></svg><svg class='a' style='left:1094.8px;top:6.1px' width='17' height='17' viewBox='0 0 17 17' fill='none' stroke='#b9b9b9' stroke-width='1' stroke-linejoin='miter'><path d='M0.7 16.2 L0.9 12.1 L11.2 1.9 a1.5 1.5 0 0 1 2.1 0 L15 3.6 a1.5 1.5 0 0 1 0 2.1 L4.8 16 Z'/><path d='M9.8 3.7 L13.1 7'/></svg><svg class='a' style='left:1215.8px;top:6.1px' width='17' height='17' viewBox='0 0 17 17' fill='none' stroke='#b9b9b9' stroke-width='1' stroke-linejoin='miter'><path d='M0.7 16.2 L0.9 12.1 L11.2 1.9 a1.5 1.5 0 0 1 2.1 0 L15 3.6 a1.5 1.5 0 0 1 0 2.1 L4.8 16 Z'/><path d='M9.8 3.7 L13.1 7'/></svg><span class='n' style='right:1095.7px;letter-spacing:0.01px'>1.60</span><span class='n' style='right:974.7px;letter-spacing:0.01px'>18.40</span><span class='n' style='right:853.7px;letter-spacing:0.01px'>16.00</span><span class='n' style='right:732.7px;letter-spacing:0.01px'>4.00</span></div>
<div class='a row b' style='top:386.77px;width:471px;overflow:hidden'><span class='c' style='left:187.3px;letter-spacing:-0.64px'>Anfrage</span><span class='n' style='right:89.8px;letter-spacing:0.01px'>40.00</span><span class='n' style='right:6.2px;letter-spacing:0.01px'>40.00</span><svg class='a' style='left:307.6px;top:6.1px' width='17' height='17' viewBox='0 0 17 17' fill='none' stroke='#b9b9b9' stroke-width='1' stroke-linejoin='miter'><path d='M0.7 16.2 L0.9 12.1 L11.2 1.9 a1.5 1.5 0 0 1 2.1 0 L15 3.6 a1.5 1.5 0 0 1 0 2.1 L4.8 16 Z'/><path d='M9.8 3.7 L13.1 7'/></svg></div><div class='a row b' style='top:385.47px;left:471px;width:1333px;overflow:hidden'><svg class='a' style='left:5.8px;top:6.1px' width='17' height='17' viewBox='0 0 17 17' fill='none' stroke='#b9b9b9' stroke-width='1' stroke-linejoin='miter'><path d='M0.7 16.2 L0.9 12.1 L11.2 1.9 a1.5 1.5 0 0 1 2.1 0 L15 3.6 a1.5 1.5 0 0 1 0 2.1 L4.8 16 Z'/><path d='M9.8 3.7 L13.1 7'/></svg><svg class='a' style='left:126.8px;top:6.1px' width='17' height='17' viewBox='0 0 17 17' fill='none' stroke='#b9b9b9' stroke-width='1' stroke-linejoin='miter'><path d='M0.7 16.2 L0.9 12.1 L11.2 1.9 a1.5 1.5 0 0 1 2.1 0 L15 3.6 a1.5 1.5 0 0 1 0 2.1 L4.8 16 Z'/><path d='M9.8 3.7 L13.1 7'/></svg><svg class='a' style='left:247.8px;top:6.1px' width='17' height='17' viewBox='0 0 17 17' fill='none' stroke='#b9b9b9' stroke-width='1' stroke-linejoin='miter'><path d='M0.7 16.2 L0.9 12.1 L11.2 1.9 a1.5 1.5 0 0 1 2.1 0 L15 3.6 a1.5 1.5 0 0 1 0 2.1 L4.8 16 Z'/><path d='M9.8 3.7 L13.1 7'/></svg><svg class='a' style='left:368.8px;top:6.1px' width='17' height='17' viewBox='0 0 17 17' fill='none' stroke='#b9b9b9' stroke-width='1' stroke-linejoin='miter'><path d='M0.7 16.2 L0.9 12.1 L11.2 1.9 a1.5 1.5 0 0 1 2.1 0 L15 3.6 a1.5 1.5 0 0 1 0 2.1 L4.8 16 Z'/><path d='M9.8 3.7 L13.1 7'/></svg><svg class='a' style='left:489.8px;top:6.1px' width='17' height='17' viewBox='0 0 17 17' fill='none' stroke='#b9b9b9' stroke-width='1' stroke-linejoin='miter'><path d='M0.7 16.2 L0.9 12.1 L11.2 1.9 a1.5 1.5 0 0 1 2.1 0 L15 3.6 a1.5 1.5 0 0 1 0 2.1 L4.8 16 Z'/><path d='M9.8 3.7 L13.1 7'/></svg><svg class='a' style='left:610.8px;top:6.1px' width='17' height='17' viewBox='0 0 17 17' fill='none' stroke='#b9b9b9' stroke-width='1' stroke-linejoin='miter'><path d='M0.7 16.2 L0.9 12.1 L11.2 1.9 a1.5 1.5 0 0 1 2.1 0 L15 3.6 a1.5 1.5 0 0 1 0 2.1 L4.8 16 Z'/><path d='M9.8 3.7 L13.1 7'/></svg><svg class='a' style='left:731.8px;top:6.1px' width='17' height='17' viewBox='0 0 17 17' fill='none' stroke='#b9b9b9' stroke-width='1' stroke-linejoin='miter'><path d='M0.7 16.2 L0.9 12.1 L11.2 1.9 a1.5 1.5 0 0 1 2.1 0 L15 3.6 a1.5 1.5 0 0 1 0 2.1 L4.8 16 Z'/><path d='M9.8 3.7 L13.1 7'/></svg><svg class='a' style='left:852.8px;top:6.1px' width='17' height='17' viewBox='0 0 17 17' fill='none' stroke='#b9b9b9' stroke-width='1' stroke-linejoin='miter'><path d='M0.7 16.2 L0.9 12.1 L11.2 1.9 a1.5 1.5 0 0 1 2.1 0 L15 3.6 a1.5 1.5 0 0 1 0 2.1 L4.8 16 Z'/><path d='M9.8 3.7 L13.1 7'/></svg><svg class='a' style='left:973.8px;top:6.1px' width='17' height='17' viewBox='0 0 17 17' fill='none' stroke='#b9b9b9' stroke-width='1' stroke-linejoin='miter'><path d='M0.7 16.2 L0.9 12.1 L11.2 1.9 a1.5 1.5 0 0 1 2.1 0 L15 3.6 a1.5 1.5 0 0 1 0 2.1 L4.8 16 Z'/><path d='M9.8 3.7 L13.1 7'/></svg><svg class='a' style='left:1094.8px;top:6.1px' width='17' height='17' viewBox='0 0 17 17' fill='none' stroke='#b9b9b9' stroke-width='1' stroke-linejoin='miter'><path d='M0.7 16.2 L0.9 12.1 L11.2 1.9 a1.5 1.5 0 0 1 2.1 0 L15 3.6 a1.5 1.5 0 0 1 0 2.1 L4.8 16 Z'/><path d='M9.8 3.7 L13.1 7'/></svg><svg class='a' style='left:1215.8px;top:6.1px' width='17' height='17' viewBox='0 0 17 17' fill='none' stroke='#b9b9b9' stroke-width='1' stroke-linejoin='miter'><path d='M0.7 16.2 L0.9 12.1 L11.2 1.9 a1.5 1.5 0 0 1 2.1 0 L15 3.6 a1.5 1.5 0 0 1 0 2.1 L4.8 16 Z'/><path d='M9.8 3.7 L13.1 7'/></svg><span class='n' style='right:1095.7px;letter-spacing:0.01px'>15.00</span><span class='n' style='right:853.7px;letter-spacing:0.01px'>25.00</span></div>
<div class='a row ' style='top:418.24px;width:471px;overflow:hidden'><svg class='a' style='left:33.2px;top:9px' width='15' height='14.4' viewBox='0 0 15 14.4' fill='none' stroke='#111' stroke-width='1.5' stroke-linejoin='round'><rect x='0.9' y='0.9' width='13.2' height='12.6' rx='2.2'/><path d='M3.4 4.4 H11.6 M3.4 7.6 H8' stroke-linecap='butt'/><path d='M10 7.4 L12.4 9.8 L10 12.2 L7.6 9.8 Z' fill='#111' stroke='none'/></svg><span class='c' style='left:54.6px;letter-spacing:-0.4px'>Saale-Elster-...</span><span class='a' style='left:164px;top:14.6px;width:12px;height:2.2px;background:#111'></span><span class='c' style='left:187.3px;letter-spacing:0.15px'>Commitment</span><span class='n' style='right:89.8px;letter-spacing:-0.3px'>40.00</span><span class='n' style='right:6.2px;letter-spacing:-0.3px'>40.00</span><svg class='a' style='left:307.6px;top:6.1px' width='17' height='17' viewBox='0 0 17 17' fill='none' stroke='#b9b9b9' stroke-width='1' stroke-linejoin='miter'><path d='M0.7 16.2 L0.9 12.1 L11.2 1.9 a1.5 1.5 0 0 1 2.1 0 L15 3.6 a1.5 1.5 0 0 1 0 2.1 L4.8 16 Z'/><path d='M9.8 3.7 L13.1 7'/></svg></div><div class='a row ' style='top:416.94px;left:471px;width:1333px;overflow:hidden'><svg class='a' style='left:5.8px;top:6.1px' width='17' height='17' viewBox='0 0 17 17' fill='none' stroke='#b9b9b9' stroke-width='1' stroke-linejoin='miter'><path d='M0.7 16.2 L0.9 12.1 L11.2 1.9 a1.5 1.5 0 0 1 2.1 0 L15 3.6 a1.5 1.5 0 0 1 0 2.1 L4.8 16 Z'/><path d='M9.8 3.7 L13.1 7'/></svg><svg class='a' style='left:126.8px;top:6.1px' width='17' height='17' viewBox='0 0 17 17' fill='none' stroke='#b9b9b9' stroke-width='1' stroke-linejoin='miter'><path d='M0.7 16.2 L0.9 12.1 L11.2 1.9 a1.5 1.5 0 0 1 2.1 0 L15 3.6 a1.5 1.5 0 0 1 0 2.1 L4.8 16 Z'/><path d='M9.8 3.7 L13.1 7'/></svg><svg class='a' style='left:247.8px;top:6.1px' width='17' height='17' viewBox='0 0 17 17' fill='none' stroke='#b9b9b9' stroke-width='1' stroke-linejoin='miter'><path d='M0.7 16.2 L0.9 12.1 L11.2 1.9 a1.5 1.5 0 0 1 2.1 0 L15 3.6 a1.5 1.5 0 0 1 0 2.1 L4.8 16 Z'/><path d='M9.8 3.7 L13.1 7'/></svg><svg class='a' style='left:368.8px;top:6.1px' width='17' height='17' viewBox='0 0 17 17' fill='none' stroke='#b9b9b9' stroke-width='1' stroke-linejoin='miter'><path d='M0.7 16.2 L0.9 12.1 L11.2 1.9 a1.5 1.5 0 0 1 2.1 0 L15 3.6 a1.5 1.5 0 0 1 0 2.1 L4.8 16 Z'/><path d='M9.8 3.7 L13.1 7'/></svg><svg class='a' style='left:489.8px;top:6.1px' width='17' height='17' viewBox='0 0 17 17' fill='none' stroke='#b9b9b9' stroke-width='1' stroke-linejoin='miter'><path d='M0.7 16.2 L0.9 12.1 L11.2 1.9 a1.5 1.5 0 0 1 2.1 0 L15 3.6 a1.5 1.5 0 0 1 0 2.1 L4.8 16 Z'/><path d='M9.8 3.7 L13.1 7'/></svg><svg class='a' style='left:610.8px;top:6.1px' width='17' height='17' viewBox='0 0 17 17' fill='none' stroke='#b9b9b9' stroke-width='1' stroke-linejoin='miter'><path d='M0.7 16.2 L0.9 12.1 L11.2 1.9 a1.5 1.5 0 0 1 2.1 0 L15 3.6 a1.5 1.5 0 0 1 0 2.1 L4.8 16 Z'/><path d='M9.8 3.7 L13.1 7'/></svg><svg class='a' style='left:731.8px;top:6.1px' width='17' height='17' viewBox='0 0 17 17' fill='none' stroke='#b9b9b9' stroke-width='1' stroke-linejoin='miter'><path d='M0.7 16.2 L0.9 12.1 L11.2 1.9 a1.5 1.5 0 0 1 2.1 0 L15 3.6 a1.5 1.5 0 0 1 0 2.1 L4.8 16 Z'/><path d='M9.8 3.7 L13.1 7'/></svg><svg class='a' style='left:852.8px;top:6.1px' width='17' height='17' viewBox='0 0 17 17' fill='none' stroke='#b9b9b9' stroke-width='1' stroke-linejoin='miter'><path d='M0.7 16.2 L0.9 12.1 L11.2 1.9 a1.5 1.5 0 0 1 2.1 0 L15 3.6 a1.5 1.5 0 0 1 0 2.1 L4.8 16 Z'/><path d='M9.8 3.7 L13.1 7'/></svg><svg class='a' style='left:973.8px;top:6.1px' width='17' height='17' viewBox='0 0 17 17' fill='none' stroke='#b9b9b9' stroke-width='1' stroke-linejoin='miter'><path d='M0.7 16.2 L0.9 12.1 L11.2 1.9 a1.5 1.5 0 0 1 2.1 0 L15 3.6 a1.5 1.5 0 0 1 0 2.1 L4.8 16 Z'/><path d='M9.8 3.7 L13.1 7'/></svg><svg class='a' style='left:1094.8px;top:6.1px' width='17' height='17' viewBox='0 0 17 17' fill='none' stroke='#b9b9b9' stroke-width='1' stroke-linejoin='miter'><path d='M0.7 16.2 L0.9 12.1 L11.2 1.9 a1.5 1.5 0 0 1 2.1 0 L15 3.6 a1.5 1.5 0 0 1 0 2.1 L4.8 16 Z'/><path d='M9.8 3.7 L13.1 7'/></svg><svg class='a' style='left:1215.8px;top:6.1px' width='17' height='17' viewBox='0 0 17 17' fill='none' stroke='#b9b9b9' stroke-width='1' stroke-linejoin='miter'><path d='M0.7 16.2 L0.9 12.1 L11.2 1.9 a1.5 1.5 0 0 1 2.1 0 L15 3.6 a1.5 1.5 0 0 1 0 2.1 L4.8 16 Z'/><path d='M9.8 3.7 L13.1 7'/></svg><span class='n' style='right:1095.7px;letter-spacing:-0.3px'>1.60</span><span class='n' style='right:974.7px;letter-spacing:-0.3px'>18.40</span><span class='n' style='right:853.7px;letter-spacing:-0.3px'>16.00</span><span class='n' style='right:732.7px;letter-spacing:-0.3px'>4.00</span></div>
<div class='a row ' style='top:449.71px;width:471px;overflow:hidden'><span class='c' style='left:187.3px;letter-spacing:-0.14px'>Anfrage</span><span class='n' style='right:89.8px;letter-spacing:-0.3px'>40.00</span><span class='n' style='right:6.2px;letter-spacing:-0.3px'>40.00</span><svg class='a' style='left:307.6px;top:6.1px' width='17' height='17' viewBox='0 0 17 17' fill='none' stroke='#b9b9b9' stroke-width='1' stroke-linejoin='miter'><path d='M0.7 16.2 L0.9 12.1 L11.2 1.9 a1.5 1.5 0 0 1 2.1 0 L15 3.6 a1.5 1.5 0 0 1 0 2.1 L4.8 16 Z'/><path d='M9.8 3.7 L13.1 7'/></svg></div><div class='a row ' style='top:448.41px;left:471px;width:1333px;overflow:hidden'><svg class='a' style='left:5.8px;top:6.1px' width='17' height='17' viewBox='0 0 17 17' fill='none' stroke='#b9b9b9' stroke-width='1' stroke-linejoin='miter'><path d='M0.7 16.2 L0.9 12.1 L11.2 1.9 a1.5 1.5 0 0 1 2.1 0 L15 3.6 a1.5 1.5 0 0 1 0 2.1 L4.8 16 Z'/><path d='M9.8 3.7 L13.1 7'/></svg><svg class='a' style='left:126.8px;top:6.1px' width='17' height='17' viewBox='0 0 17 17' fill='none' stroke='#b9b9b9' stroke-width='1' stroke-linejoin='miter'><path d='M0.7 16.2 L0.9 12.1 L11.2 1.9 a1.5 1.5 0 0 1 2.1 0 L15 3.6 a1.5 1.5 0 0 1 0 2.1 L4.8 16 Z'/><path d='M9.8 3.7 L13.1 7'/></svg><svg class='a' style='left:247.8px;top:6.1px' width='17' height='17' viewBox='0 0 17 17' fill='none' stroke='#b9b9b9' stroke-width='1' stroke-linejoin='miter'><path d='M0.7 16.2 L0.9 12.1 L11.2 1.9 a1.5 1.5 0 0 1 2.1 0 L15 3.6 a1.5 1.5 0 0 1 0 2.1 L4.8 16 Z'/><path d='M9.8 3.7 L13.1 7'/></svg><svg class='a' style='left:368.8px;top:6.1px' width='17' height='17' viewBox='0 0 17 17' fill='none' stroke='#b9b9b9' stroke-width='1' stroke-linejoin='miter'><path d='M0.7 16.2 L0.9 12.1 L11.2 1.9 a1.5 1.5 0 0 1 2.1 0 L15 3.6 a1.5 1.5 0 0 1 0 2.1 L4.8 16 Z'/><path d='M9.8 3.7 L13.1 7'/></svg><svg class='a' style='left:489.8px;top:6.1px' width='17' height='17' viewBox='0 0 17 17' fill='none' stroke='#b9b9b9' stroke-width='1' stroke-linejoin='miter'><path d='M0.7 16.2 L0.9 12.1 L11.2 1.9 a1.5 1.5 0 0 1 2.1 0 L15 3.6 a1.5 1.5 0 0 1 0 2.1 L4.8 16 Z'/><path d='M9.8 3.7 L13.1 7'/></svg><svg class='a' style='left:610.8px;top:6.1px' width='17' height='17' viewBox='0 0 17 17' fill='none' stroke='#b9b9b9' stroke-width='1' stroke-linejoin='miter'><path d='M0.7 16.2 L0.9 12.1 L11.2 1.9 a1.5 1.5 0 0 1 2.1 0 L15 3.6 a1.5 1.5 0 0 1 0 2.1 L4.8 16 Z'/><path d='M9.8 3.7 L13.1 7'/></svg><svg class='a' style='left:731.8px;top:6.1px' width='17' height='17' viewBox='0 0 17 17' fill='none' stroke='#b9b9b9' stroke-width='1' stroke-linejoin='miter'><path d='M0.7 16.2 L0.9 12.1 L11.2 1.9 a1.5 1.5 0 0 1 2.1 0 L15 3.6 a1.5 1.5 0 0 1 0 2.1 L4.8 16 Z'/><path d='M9.8 3.7 L13.1 7'/></svg><svg class='a' style='left:852.8px;top:6.1px' width='17' height='17' viewBox='0 0 17 17' fill='none' stroke='#b9b9b9' stroke-width='1' stroke-linejoin='miter'><path d='M0.7 16.2 L0.9 12.1 L11.2 1.9 a1.5 1.5 0 0 1 2.1 0 L15 3.6 a1.5 1.5 0 0 1 0 2.1 L4.8 16 Z'/><path d='M9.8 3.7 L13.1 7'/></svg><svg class='a' style='left:973.8px;top:6.1px' width='17' height='17' viewBox='0 0 17 17' fill='none' stroke='#b9b9b9' stroke-width='1' stroke-linejoin='miter'><path d='M0.7 16.2 L0.9 12.1 L11.2 1.9 a1.5 1.5 0 0 1 2.1 0 L15 3.6 a1.5 1.5 0 0 1 0 2.1 L4.8 16 Z'/><path d='M9.8 3.7 L13.1 7'/></svg><svg class='a' style='left:1094.8px;top:6.1px' width='17' height='17' viewBox='0 0 17 17' fill='none' stroke='#b9b9b9' stroke-width='1' stroke-linejoin='miter'><path d='M0.7 16.2 L0.9 12.1 L11.2 1.9 a1.5 1.5 0 0 1 2.1 0 L15 3.6 a1.5 1.5 0 0 1 0 2.1 L4.8 16 Z'/><path d='M9.8 3.7 L13.1 7'/></svg><svg class='a' style='left:1215.8px;top:6.1px' width='17' height='17' viewBox='0 0 17 17' fill='none' stroke='#b9b9b9' stroke-width='1' stroke-linejoin='miter'><path d='M0.7 16.2 L0.9 12.1 L11.2 1.9 a1.5 1.5 0 0 1 2.1 0 L15 3.6 a1.5 1.5 0 0 1 0 2.1 L4.8 16 Z'/><path d='M9.8 3.7 L13.1 7'/></svg><span class='n' style='right:1095.7px;letter-spacing:-0.3px'>15.00</span><span class='n' style='right:853.7px;letter-spacing:-0.3px'>25.00</span></div>
<div class='a row ' style='top:481.18px;width:471px;overflow:hidden'><svg class='a' style='left:44.4px;top:9.6px' width='17' height='13' viewBox='0 0 17 13'><path d='M1.6 0.4 H6 L7.8 2.2 H15.2 A1.3 1.3 0 0 1 16.5 3.5 V11.2 A1.3 1.3 0 0 1 15.2 12.5 H1.8 A1.3 1.3 0 0 1 0.5 11.2 V1.6 A1.2 1.2 0 0 1 1.6 0.4 Z' fill='#050505'/></svg><span class='c' style='left:67px;letter-spacing:-0.32px'>Reparatur ...</span><span class='a' style='left:164px;top:14.6px;width:12px;height:2.2px;background:#111'></span><span class='c' style='left:187.3px;letter-spacing:0.15px'>Commitment</span><span class='n' style='right:89.8px;letter-spacing:-0.3px'>40.00</span><span class='n' style='right:6.2px;letter-spacing:-0.3px'>40.00</span><svg class='a' style='left:307.6px;top:6.1px' width='17' height='17' viewBox='0 0 17 17' fill='none' stroke='#b9b9b9' stroke-width='1' stroke-linejoin='miter'><path d='M0.7 16.2 L0.9 12.1 L11.2 1.9 a1.5 1.5 0 0 1 2.1 0 L15 3.6 a1.5 1.5 0 0 1 0 2.1 L4.8 16 Z'/><path d='M9.8 3.7 L13.1 7'/></svg></div><div class='a row ' style='top:479.88px;left:471px;width:1333px;overflow:hidden'><svg class='a' style='left:5.8px;top:6.1px' width='17' height='17' viewBox='0 0 17 17' fill='none' stroke='#b9b9b9' stroke-width='1' stroke-linejoin='miter'><path d='M0.7 16.2 L0.9 12.1 L11.2 1.9 a1.5 1.5 0 0 1 2.1 0 L15 3.6 a1.5 1.5 0 0 1 0 2.1 L4.8 16 Z'/><path d='M9.8 3.7 L13.1 7'/></svg><svg class='a' style='left:126.8px;top:6.1px' width='17' height='17' viewBox='0 0 17 17' fill='none' stroke='#b9b9b9' stroke-width='1' stroke-linejoin='miter'><path d='M0.7 16.2 L0.9 12.1 L11.2 1.9 a1.5 1.5 0 0 1 2.1 0 L15 3.6 a1.5 1.5 0 0 1 0 2.1 L4.8 16 Z'/><path d='M9.8 3.7 L13.1 7'/></svg><svg class='a' style='left:247.8px;top:6.1px' width='17' height='17' viewBox='0 0 17 17' fill='none' stroke='#b9b9b9' stroke-width='1' stroke-linejoin='miter'><path d='M0.7 16.2 L0.9 12.1 L11.2 1.9 a1.5 1.5 0 0 1 2.1 0 L15 3.6 a1.5 1.5 0 0 1 0 2.1 L4.8 16 Z'/><path d='M9.8 3.7 L13.1 7'/></svg><svg class='a' style='left:368.8px;top:6.1px' width='17' height='17' viewBox='0 0 17 17' fill='none' stroke='#b9b9b9' stroke-width='1' stroke-linejoin='miter'><path d='M0.7 16.2 L0.9 12.1 L11.2 1.9 a1.5 1.5 0 0 1 2.1 0 L15 3.6 a1.5 1.5 0 0 1 0 2.1 L4.8 16 Z'/><path d='M9.8 3.7 L13.1 7'/></svg><svg class='a' style='left:489.8px;top:6.1px' width='17' height='17' viewBox='0 0 17 17' fill='none' stroke='#b9b9b9' stroke-width='1' stroke-linejoin='miter'><path d='M0.7 16.2 L0.9 12.1 L11.2 1.9 a1.5 1.5 0 0 1 2.1 0 L15 3.6 a1.5 1.5 0 0 1 0 2.1 L4.8 16 Z'/><path d='M9.8 3.7 L13.1 7'/></svg><svg class='a' style='left:610.8px;top:6.1px' width='17' height='17' viewBox='0 0 17 17' fill='none' stroke='#b9b9b9' stroke-width='1' stroke-linejoin='miter'><path d='M0.7 16.2 L0.9 12.1 L11.2 1.9 a1.5 1.5 0 0 1 2.1 0 L15 3.6 a1.5 1.5 0 0 1 0 2.1 L4.8 16 Z'/><path d='M9.8 3.7 L13.1 7'/></svg><svg class='a' style='left:731.8px;top:6.1px' width='17' height='17' viewBox='0 0 17 17' fill='none' stroke='#b9b9b9' stroke-width='1' stroke-linejoin='miter'><path d='M0.7 16.2 L0.9 12.1 L11.2 1.9 a1.5 1.5 0 0 1 2.1 0 L15 3.6 a1.5 1.5 0 0 1 0 2.1 L4.8 16 Z'/><path d='M9.8 3.7 L13.1 7'/></svg><svg class='a' style='left:852.8px;top:6.1px' width='17' height='17' viewBox='0 0 17 17' fill='none' stroke='#b9b9b9' stroke-width='1' stroke-linejoin='miter'><path d='M0.7 16.2 L0.9 12.1 L11.2 1.9 a1.5 1.5 0 0 1 2.1 0 L15 3.6 a1.5 1.5 0 0 1 0 2.1 L4.8 16 Z'/><path d='M9.8 3.7 L13.1 7'/></svg><svg class='a' style='left:973.8px;top:6.1px' width='17' height='17' viewBox='0 0 17 17' fill='none' stroke='#b9b9b9' stroke-width='1' stroke-linejoin='miter'><path d='M0.7 16.2 L0.9 12.1 L11.2 1.9 a1.5 1.5 0 0 1 2.1 0 L15 3.6 a1.5 1.5 0 0 1 0 2.1 L4.8 16 Z'/><path d='M9.8 3.7 L13.1 7'/></svg><svg class='a' style='left:1094.8px;top:6.1px' width='17' height='17' viewBox='0 0 17 17' fill='none' stroke='#b9b9b9' stroke-width='1' stroke-linejoin='miter'><path d='M0.7 16.2 L0.9 12.1 L11.2 1.9 a1.5 1.5 0 0 1 2.1 0 L15 3.6 a1.5 1.5 0 0 1 0 2.1 L4.8 16 Z'/><path d='M9.8 3.7 L13.1 7'/></svg><svg class='a' style='left:1215.8px;top:6.1px' width='17' height='17' viewBox='0 0 17 17' fill='none' stroke='#b9b9b9' stroke-width='1' stroke-linejoin='miter'><path d='M0.7 16.2 L0.9 12.1 L11.2 1.9 a1.5 1.5 0 0 1 2.1 0 L15 3.6 a1.5 1.5 0 0 1 0 2.1 L4.8 16 Z'/><path d='M9.8 3.7 L13.1 7'/></svg><span class='n' style='right:1095.7px;letter-spacing:-0.3px'>1.60</span><span class='n' style='right:974.7px;letter-spacing:-0.3px'>18.40</span><span class='n' style='right:853.7px;letter-spacing:-0.3px'>16.00</span><span class='n' style='right:732.7px;letter-spacing:-0.3px'>4.00</span></div>
<div class='a row ' style='top:512.65px;width:471px;overflow:hidden'><span class='c' style='left:187.3px;letter-spacing:-0.14px'>Anfrage</span><span class='n' style='right:89.8px;letter-spacing:-0.3px'>40.00</span><span class='n' style='right:6.2px;letter-spacing:-0.3px'>40.00</span><svg class='a' style='left:307.6px;top:6.1px' width='17' height='17' viewBox='0 0 17 17' fill='none' stroke='#b9b9b9' stroke-width='1' stroke-linejoin='miter'><path d='M0.7 16.2 L0.9 12.1 L11.2 1.9 a1.5 1.5 0 0 1 2.1 0 L15 3.6 a1.5 1.5 0 0 1 0 2.1 L4.8 16 Z'/><path d='M9.8 3.7 L13.1 7'/></svg></div><div class='a row ' style='top:511.35px;left:471px;width:1333px;overflow:hidden'><svg class='a' style='left:5.8px;top:6.1px' width='17' height='17' viewBox='0 0 17 17' fill='none' stroke='#b9b9b9' stroke-width='1' stroke-linejoin='miter'><path d='M0.7 16.2 L0.9 12.1 L11.2 1.9 a1.5 1.5 0 0 1 2.1 0 L15 3.6 a1.5 1.5 0 0 1 0 2.1 L4.8 16 Z'/><path d='M9.8 3.7 L13.1 7'/></svg><svg class='a' style='left:126.8px;top:6.1px' width='17' height='17' viewBox='0 0 17 17' fill='none' stroke='#b9b9b9' stroke-width='1' stroke-linejoin='miter'><path d='M0.7 16.2 L0.9 12.1 L11.2 1.9 a1.5 1.5 0 0 1 2.1 0 L15 3.6 a1.5 1.5 0 0 1 0 2.1 L4.8 16 Z'/><path d='M9.8 3.7 L13.1 7'/></svg><svg class='a' style='left:247.8px;top:6.1px' width='17' height='17' viewBox='0 0 17 17' fill='none' stroke='#b9b9b9' stroke-width='1' stroke-linejoin='miter'><path d='M0.7 16.2 L0.9 12.1 L11.2 1.9 a1.5 1.5 0 0 1 2.1 0 L15 3.6 a1.5 1.5 0 0 1 0 2.1 L4.8 16 Z'/><path d='M9.8 3.7 L13.1 7'/></svg><svg class='a' style='left:368.8px;top:6.1px' width='17' height='17' viewBox='0 0 17 17' fill='none' stroke='#b9b9b9' stroke-width='1' stroke-linejoin='miter'><path d='M0.7 16.2 L0.9 12.1 L11.2 1.9 a1.5 1.5 0 0 1 2.1 0 L15 3.6 a1.5 1.5 0 0 1 0 2.1 L4.8 16 Z'/><path d='M9.8 3.7 L13.1 7'/></svg><svg class='a' style='left:489.8px;top:6.1px' width='17' height='17' viewBox='0 0 17 17' fill='none' stroke='#b9b9b9' stroke-width='1' stroke-linejoin='miter'><path d='M0.7 16.2 L0.9 12.1 L11.2 1.9 a1.5 1.5 0 0 1 2.1 0 L15 3.6 a1.5 1.5 0 0 1 0 2.1 L4.8 16 Z'/><path d='M9.8 3.7 L13.1 7'/></svg><svg class='a' style='left:610.8px;top:6.1px' width='17' height='17' viewBox='0 0 17 17' fill='none' stroke='#b9b9b9' stroke-width='1' stroke-linejoin='miter'><path d='M0.7 16.2 L0.9 12.1 L11.2 1.9 a1.5 1.5 0 0 1 2.1 0 L15 3.6 a1.5 1.5 0 0 1 0 2.1 L4.8 16 Z'/><path d='M9.8 3.7 L13.1 7'/></svg><svg class='a' style='left:731.8px;top:6.1px' width='17' height='17' viewBox='0 0 17 17' fill='none' stroke='#b9b9b9' stroke-width='1' stroke-linejoin='miter'><path d='M0.7 16.2 L0.9 12.1 L11.2 1.9 a1.5 1.5 0 0 1 2.1 0 L15 3.6 a1.5 1.5 0 0 1 0 2.1 L4.8 16 Z'/><path d='M9.8 3.7 L13.1 7'/></svg><svg class='a' style='left:852.8px;top:6.1px' width='17' height='17' viewBox='0 0 17 17' fill='none' stroke='#b9b9b9' stroke-width='1' stroke-linejoin='miter'><path d='M0.7 16.2 L0.9 12.1 L11.2 1.9 a1.5 1.5 0 0 1 2.1 0 L15 3.6 a1.5 1.5 0 0 1 0 2.1 L4.8 16 Z'/><path d='M9.8 3.7 L13.1 7'/></svg><svg class='a' style='left:973.8px;top:6.1px' width='17' height='17' viewBox='0 0 17 17' fill='none' stroke='#b9b9b9' stroke-width='1' stroke-linejoin='miter'><path d='M0.7 16.2 L0.9 12.1 L11.2 1.9 a1.5 1.5 0 0 1 2.1 0 L15 3.6 a1.5 1.5 0 0 1 0 2.1 L4.8 16 Z'/><path d='M9.8 3.7 L13.1 7'/></svg><svg class='a' style='left:1094.8px;top:6.1px' width='17' height='17' viewBox='0 0 17 17' fill='none' stroke='#b9b9b9' stroke-width='1' stroke-linejoin='miter'><path d='M0.7 16.2 L0.9 12.1 L11.2 1.9 a1.5 1.5 0 0 1 2.1 0 L15 3.6 a1.5 1.5 0 0 1 0 2.1 L4.8 16 Z'/><path d='M9.8 3.7 L13.1 7'/></svg><svg class='a' style='left:1215.8px;top:6.1px' width='17' height='17' viewBox='0 0 17 17' fill='none' stroke='#b9b9b9' stroke-width='1' stroke-linejoin='miter'><path d='M0.7 16.2 L0.9 12.1 L11.2 1.9 a1.5 1.5 0 0 1 2.1 0 L15 3.6 a1.5 1.5 0 0 1 0 2.1 L4.8 16 Z'/><path d='M9.8 3.7 L13.1 7'/></svg><span class='n' style='right:1095.7px;letter-spacing:-0.3px'>15.00</span><span class='n' style='right:853.7px;letter-spacing:-0.3px'>25.00</span></div>
<div class='a row leaf' style='top:544.12px;width:471px;overflow:hidden'><span class='c' style='left:55.4px;letter-spacing:-0.63px'>RC_00007</span><span class='c' style='left:187.3px;letter-spacing:0.15px'>Commitment</span><span class='n' style='right:89.8px;letter-spacing:-0.3px'>20.00</span><span class='n' style='right:6.2px;letter-spacing:-0.3px'>20.00</span><svg class='a' style='left:307.6px;top:6.1px' width='17' height='17' viewBox='0 0 17 17' fill='none' stroke='#b9b9b9' stroke-width='1' stroke-linejoin='miter'><path d='M0.7 16.2 L0.9 12.1 L11.2 1.9 a1.5 1.5 0 0 1 2.1 0 L15 3.6 a1.5 1.5 0 0 1 0 2.1 L4.8 16 Z'/><path d='M9.8 3.7 L13.1 7'/></svg></div><div class='a row leaf' style='top:542.82px;left:471px;width:1333px;overflow:hidden'><svg class='a' style='left:5.8px;top:6.1px' width='17' height='17' viewBox='0 0 17 17' fill='none' stroke='#b9b9b9' stroke-width='1' stroke-linejoin='miter'><path d='M0.7 16.2 L0.9 12.1 L11.2 1.9 a1.5 1.5 0 0 1 2.1 0 L15 3.6 a1.5 1.5 0 0 1 0 2.1 L4.8 16 Z'/><path d='M9.8 3.7 L13.1 7'/></svg><svg class='a' style='left:126.8px;top:6.1px' width='17' height='17' viewBox='0 0 17 17' fill='none' stroke='#b9b9b9' stroke-width='1' stroke-linejoin='miter'><path d='M0.7 16.2 L0.9 12.1 L11.2 1.9 a1.5 1.5 0 0 1 2.1 0 L15 3.6 a1.5 1.5 0 0 1 0 2.1 L4.8 16 Z'/><path d='M9.8 3.7 L13.1 7'/></svg><svg class='a' style='left:247.8px;top:6.1px' width='17' height='17' viewBox='0 0 17 17' fill='none' stroke='#b9b9b9' stroke-width='1' stroke-linejoin='miter'><path d='M0.7 16.2 L0.9 12.1 L11.2 1.9 a1.5 1.5 0 0 1 2.1 0 L15 3.6 a1.5 1.5 0 0 1 0 2.1 L4.8 16 Z'/><path d='M9.8 3.7 L13.1 7'/></svg><svg class='a' style='left:368.8px;top:6.1px' width='17' height='17' viewBox='0 0 17 17' fill='none' stroke='#b9b9b9' stroke-width='1' stroke-linejoin='miter'><path d='M0.7 16.2 L0.9 12.1 L11.2 1.9 a1.5 1.5 0 0 1 2.1 0 L15 3.6 a1.5 1.5 0 0 1 0 2.1 L4.8 16 Z'/><path d='M9.8 3.7 L13.1 7'/></svg><svg class='a' style='left:489.8px;top:6.1px' width='17' height='17' viewBox='0 0 17 17' fill='none' stroke='#b9b9b9' stroke-width='1' stroke-linejoin='miter'><path d='M0.7 16.2 L0.9 12.1 L11.2 1.9 a1.5 1.5 0 0 1 2.1 0 L15 3.6 a1.5 1.5 0 0 1 0 2.1 L4.8 16 Z'/><path d='M9.8 3.7 L13.1 7'/></svg><svg class='a' style='left:610.8px;top:6.1px' width='17' height='17' viewBox='0 0 17 17' fill='none' stroke='#b9b9b9' stroke-width='1' stroke-linejoin='miter'><path d='M0.7 16.2 L0.9 12.1 L11.2 1.9 a1.5 1.5 0 0 1 2.1 0 L15 3.6 a1.5 1.5 0 0 1 0 2.1 L4.8 16 Z'/><path d='M9.8 3.7 L13.1 7'/></svg><svg class='a' style='left:731.8px;top:6.1px' width='17' height='17' viewBox='0 0 17 17' fill='none' stroke='#b9b9b9' stroke-width='1' stroke-linejoin='miter'><path d='M0.7 16.2 L0.9 12.1 L11.2 1.9 a1.5 1.5 0 0 1 2.1 0 L15 3.6 a1.5 1.5 0 0 1 0 2.1 L4.8 16 Z'/><path d='M9.8 3.7 L13.1 7'/></svg><svg class='a' style='left:852.8px;top:6.1px' width='17' height='17' viewBox='0 0 17 17' fill='none' stroke='#b9b9b9' stroke-width='1' stroke-linejoin='miter'><path d='M0.7 16.2 L0.9 12.1 L11.2 1.9 a1.5 1.5 0 0 1 2.1 0 L15 3.6 a1.5 1.5 0 0 1 0 2.1 L4.8 16 Z'/><path d='M9.8 3.7 L13.1 7'/></svg><svg class='a' style='left:973.8px;top:6.1px' width='17' height='17' viewBox='0 0 17 17' fill='none' stroke='#b9b9b9' stroke-width='1' stroke-linejoin='miter'><path d='M0.7 16.2 L0.9 12.1 L11.2 1.9 a1.5 1.5 0 0 1 2.1 0 L15 3.6 a1.5 1.5 0 0 1 0 2.1 L4.8 16 Z'/><path d='M9.8 3.7 L13.1 7'/></svg><svg class='a' style='left:1094.8px;top:6.1px' width='17' height='17' viewBox='0 0 17 17' fill='none' stroke='#b9b9b9' stroke-width='1' stroke-linejoin='miter'><path d='M0.7 16.2 L0.9 12.1 L11.2 1.9 a1.5 1.5 0 0 1 2.1 0 L15 3.6 a1.5 1.5 0 0 1 0 2.1 L4.8 16 Z'/><path d='M9.8 3.7 L13.1 7'/></svg><svg class='a' style='left:1215.8px;top:6.1px' width='17' height='17' viewBox='0 0 17 17' fill='none' stroke='#b9b9b9' stroke-width='1' stroke-linejoin='miter'><path d='M0.7 16.2 L0.9 12.1 L11.2 1.9 a1.5 1.5 0 0 1 2.1 0 L15 3.6 a1.5 1.5 0 0 1 0 2.1 L4.8 16 Z'/><path d='M9.8 3.7 L13.1 7'/></svg><span class='n' style='right:1095.7px;letter-spacing:-0.3px'>0.80</span><span class='n' style='right:974.7px;letter-spacing:-0.3px'>9.20</span><span class='n' style='right:853.7px;letter-spacing:-0.3px'>8.00</span><span class='n' style='right:732.7px;letter-spacing:-0.3px'>2.00</span></div>
<div class='a row leaf' style='top:575.59px;width:471px;overflow:hidden'><span class='c' style='left:55.4px;letter-spacing:-0.63px'>RC_00008</span><span class='c' style='left:187.3px;letter-spacing:0.15px'>Commitment</span><span class='n' style='right:89.8px;letter-spacing:-0.3px'>20.00</span><span class='n' style='right:6.2px;letter-spacing:-0.3px'>20.00</span><svg class='a' style='left:307.6px;top:6.1px' width='17' height='17' viewBox='0 0 17 17' fill='none' stroke='#b9b9b9' stroke-width='1' stroke-linejoin='miter'><path d='M0.7 16.2 L0.9 12.1 L11.2 1.9 a1.5 1.5 0 0 1 2.1 0 L15 3.6 a1.5 1.5 0 0 1 0 2.1 L4.8 16 Z'/><path d='M9.8 3.7 L13.1 7'/></svg></div><div class='a row leaf' style='top:574.29px;left:471px;width:1333px;overflow:hidden'><svg class='a' style='left:5.8px;top:6.1px' width='17' height='17' viewBox='0 0 17 17' fill='none' stroke='#b9b9b9' stroke-width='1' stroke-linejoin='miter'><path d='M0.7 16.2 L0.9 12.1 L11.2 1.9 a1.5 1.5 0 0 1 2.1 0 L15 3.6 a1.5 1.5 0 0 1 0 2.1 L4.8 16 Z'/><path d='M9.8 3.7 L13.1 7'/></svg><svg class='a' style='left:126.8px;top:6.1px' width='17' height='17' viewBox='0 0 17 17' fill='none' stroke='#b9b9b9' stroke-width='1' stroke-linejoin='miter'><path d='M0.7 16.2 L0.9 12.1 L11.2 1.9 a1.5 1.5 0 0 1 2.1 0 L15 3.6 a1.5 1.5 0 0 1 0 2.1 L4.8 16 Z'/><path d='M9.8 3.7 L13.1 7'/></svg><svg class='a' style='left:247.8px;top:6.1px' width='17' height='17' viewBox='0 0 17 17' fill='none' stroke='#b9b9b9' stroke-width='1' stroke-linejoin='miter'><path d='M0.7 16.2 L0.9 12.1 L11.2 1.9 a1.5 1.5 0 0 1 2.1 0 L15 3.6 a1.5 1.5 0 0 1 0 2.1 L4.8 16 Z'/><path d='M9.8 3.7 L13.1 7'/></svg><svg class='a' style='left:368.8px;top:6.1px' width='17' height='17' viewBox='0 0 17 17' fill='none' stroke='#b9b9b9' stroke-width='1' stroke-linejoin='miter'><path d='M0.7 16.2 L0.9 12.1 L11.2 1.9 a1.5 1.5 0 0 1 2.1 0 L15 3.6 a1.5 1.5 0 0 1 0 2.1 L4.8 16 Z'/><path d='M9.8 3.7 L13.1 7'/></svg><svg class='a' style='left:489.8px;top:6.1px' width='17' height='17' viewBox='0 0 17 17' fill='none' stroke='#b9b9b9' stroke-width='1' stroke-linejoin='miter'><path d='M0.7 16.2 L0.9 12.1 L11.2 1.9 a1.5 1.5 0 0 1 2.1 0 L15 3.6 a1.5 1.5 0 0 1 0 2.1 L4.8 16 Z'/><path d='M9.8 3.7 L13.1 7'/></svg><svg class='a' style='left:610.8px;top:6.1px' width='17' height='17' viewBox='0 0 17 17' fill='none' stroke='#b9b9b9' stroke-width='1' stroke-linejoin='miter'><path d='M0.7 16.2 L0.9 12.1 L11.2 1.9 a1.5 1.5 0 0 1 2.1 0 L15 3.6 a1.5 1.5 0 0 1 0 2.1 L4.8 16 Z'/><path d='M9.8 3.7 L13.1 7'/></svg><svg class='a' style='left:731.8px;top:6.1px' width='17' height='17' viewBox='0 0 17 17' fill='none' stroke='#b9b9b9' stroke-width='1' stroke-linejoin='miter'><path d='M0.7 16.2 L0.9 12.1 L11.2 1.9 a1.5 1.5 0 0 1 2.1 0 L15 3.6 a1.5 1.5 0 0 1 0 2.1 L4.8 16 Z'/><path d='M9.8 3.7 L13.1 7'/></svg><svg class='a' style='left:852.8px;top:6.1px' width='17' height='17' viewBox='0 0 17 17' fill='none' stroke='#b9b9b9' stroke-width='1' stroke-linejoin='miter'><path d='M0.7 16.2 L0.9 12.1 L11.2 1.9 a1.5 1.5 0 0 1 2.1 0 L15 3.6 a1.5 1.5 0 0 1 0 2.1 L4.8 16 Z'/><path d='M9.8 3.7 L13.1 7'/></svg><svg class='a' style='left:973.8px;top:6.1px' width='17' height='17' viewBox='0 0 17 17' fill='none' stroke='#b9b9b9' stroke-width='1' stroke-linejoin='miter'><path d='M0.7 16.2 L0.9 12.1 L11.2 1.9 a1.5 1.5 0 0 1 2.1 0 L15 3.6 a1.5 1.5 0 0 1 0 2.1 L4.8 16 Z'/><path d='M9.8 3.7 L13.1 7'/></svg><svg class='a' style='left:1094.8px;top:6.1px' width='17' height='17' viewBox='0 0 17 17' fill='none' stroke='#b9b9b9' stroke-width='1' stroke-linejoin='miter'><path d='M0.7 16.2 L0.9 12.1 L11.2 1.9 a1.5 1.5 0 0 1 2.1 0 L15 3.6 a1.5 1.5 0 0 1 0 2.1 L4.8 16 Z'/><path d='M9.8 3.7 L13.1 7'/></svg><svg class='a' style='left:1215.8px;top:6.1px' width='17' height='17' viewBox='0 0 17 17' fill='none' stroke='#b9b9b9' stroke-width='1' stroke-linejoin='miter'><path d='M0.7 16.2 L0.9 12.1 L11.2 1.9 a1.5 1.5 0 0 1 2.1 0 L15 3.6 a1.5 1.5 0 0 1 0 2.1 L4.8 16 Z'/><path d='M9.8 3.7 L13.1 7'/></svg><span class='n' style='right:1095.7px;letter-spacing:-0.3px'>0.80</span><span class='n' style='right:974.7px;letter-spacing:-0.3px'>9.20</span><span class='n' style='right:853.7px;letter-spacing:-0.3px'>8.00</span><span class='n' style='right:732.7px;letter-spacing:-0.3px'>2.00</span></div>
<div class='a row leaf' style='top:607.06px;width:471px;overflow:hidden'><span class='c' style='left:55.4px;letter-spacing:-0.63px'>RR_00016</span><span class='c' style='left:187.3px;letter-spacing:-0.14px'>Anfrage</span><span class='n' style='right:89.8px;letter-spacing:-0.3px'>15.00</span><span class='n' style='right:6.2px;letter-spacing:-0.3px'>15.00</span><svg class='a' style='left:307.6px;top:6.1px' width='17' height='17' viewBox='0 0 17 17' fill='none' stroke='#b9b9b9' stroke-width='1' stroke-linejoin='miter'><path d='M0.7 16.2 L0.9 12.1 L11.2 1.9 a1.5 1.5 0 0 1 2.1 0 L15 3.6 a1.5 1.5 0 0 1 0 2.1 L4.8 16 Z'/><path d='M9.8 3.7 L13.1 7'/></svg></div><div class='a row leaf' style='top:605.76px;left:471px;width:1333px;overflow:hidden'><svg class='a' style='left:5.8px;top:6.1px' width='17' height='17' viewBox='0 0 17 17' fill='none' stroke='#b9b9b9' stroke-width='1' stroke-linejoin='miter'><path d='M0.7 16.2 L0.9 12.1 L11.2 1.9 a1.5 1.5 0 0 1 2.1 0 L15 3.6 a1.5 1.5 0 0 1 0 2.1 L4.8 16 Z'/><path d='M9.8 3.7 L13.1 7'/></svg><svg class='a' style='left:126.8px;top:6.1px' width='17' height='17' viewBox='0 0 17 17' fill='none' stroke='#b9b9b9' stroke-width='1' stroke-linejoin='miter'><path d='M0.7 16.2 L0.9 12.1 L11.2 1.9 a1.5 1.5 0 0 1 2.1 0 L15 3.6 a1.5 1.5 0 0 1 0 2.1 L4.8 16 Z'/><path d='M9.8 3.7 L13.1 7'/></svg><svg class='a' style='left:247.8px;top:6.1px' width='17' height='17' viewBox='0 0 17 17' fill='none' stroke='#b9b9b9' stroke-width='1' stroke-linejoin='miter'><path d='M0.7 16.2 L0.9 12.1 L11.2 1.9 a1.5 1.5 0 0 1 2.1 0 L15 3.6 a1.5 1.5 0 0 1 0 2.1 L4.8 16 Z'/><path d='M9.8 3.7 L13.1 7'/></svg><svg class='a' style='left:368.8px;top:6.1px' width='17' height='17' viewBox='0 0 17 17' fill='none' stroke='#b9b9b9' stroke-width='1' stroke-linejoin='miter'><path d='M0.7 16.2 L0.9 12.1 L11.2 1.9 a1.5 1.5 0 0 1 2.1 0 L15 3.6 a1.5 1.5 0 0 1 0 2.1 L4.8 16 Z'/><path d='M9.8 3.7 L13.1 7'/></svg><svg class='a' style='left:489.8px;top:6.1px' width='17' height='17' viewBox='0 0 17 17' fill='none' stroke='#b9b9b9' stroke-width='1' stroke-linejoin='miter'><path d='M0.7 16.2 L0.9 12.1 L11.2 1.9 a1.5 1.5 0 0 1 2.1 0 L15 3.6 a1.5 1.5 0 0 1 0 2.1 L4.8 16 Z'/><path d='M9.8 3.7 L13.1 7'/></svg><svg class='a' style='left:610.8px;top:6.1px' width='17' height='17' viewBox='0 0 17 17' fill='none' stroke='#b9b9b9' stroke-width='1' stroke-linejoin='miter'><path d='M0.7 16.2 L0.9 12.1 L11.2 1.9 a1.5 1.5 0 0 1 2.1 0 L15 3.6 a1.5 1.5 0 0 1 0 2.1 L4.8 16 Z'/><path d='M9.8 3.7 L13.1 7'/></svg><svg class='a' style='left:731.8px;top:6.1px' width='17' height='17' viewBox='0 0 17 17' fill='none' stroke='#b9b9b9' stroke-width='1' stroke-linejoin='miter'><path d='M0.7 16.2 L0.9 12.1 L11.2 1.9 a1.5 1.5 0 0 1 2.1 0 L15 3.6 a1.5 1.5 0 0 1 0 2.1 L4.8 16 Z'/><path d='M9.8 3.7 L13.1 7'/></svg><svg class='a' style='left:852.8px;top:6.1px' width='17' height='17' viewBox='0 0 17 17' fill='none' stroke='#b9b9b9' stroke-width='1' stroke-linejoin='miter'><path d='M0.7 16.2 L0.9 12.1 L11.2 1.9 a1.5 1.5 0 0 1 2.1 0 L15 3.6 a1.5 1.5 0 0 1 0 2.1 L4.8 16 Z'/><path d='M9.8 3.7 L13.1 7'/></svg><svg class='a' style='left:973.8px;top:6.1px' width='17' height='17' viewBox='0 0 17 17' fill='none' stroke='#b9b9b9' stroke-width='1' stroke-linejoin='miter'><path d='M0.7 16.2 L0.9 12.1 L11.2 1.9 a1.5 1.5 0 0 1 2.1 0 L15 3.6 a1.5 1.5 0 0 1 0 2.1 L4.8 16 Z'/><path d='M9.8 3.7 L13.1 7'/></svg><svg class='a' style='left:1094.8px;top:6.1px' width='17' height='17' viewBox='0 0 17 17' fill='none' stroke='#b9b9b9' stroke-width='1' stroke-linejoin='miter'><path d='M0.7 16.2 L0.9 12.1 L11.2 1.9 a1.5 1.5 0 0 1 2.1 0 L15 3.6 a1.5 1.5 0 0 1 0 2.1 L4.8 16 Z'/><path d='M9.8 3.7 L13.1 7'/></svg><svg class='a' style='left:1215.8px;top:6.1px' width='17' height='17' viewBox='0 0 17 17' fill='none' stroke='#b9b9b9' stroke-width='1' stroke-linejoin='miter'><path d='M0.7 16.2 L0.9 12.1 L11.2 1.9 a1.5 1.5 0 0 1 2.1 0 L15 3.6 a1.5 1.5 0 0 1 0 2.1 L4.8 16 Z'/><path d='M9.8 3.7 L13.1 7'/></svg><span class='n' style='right:1095.7px;letter-spacing:-0.3px'>15.00</span></div>
<div class='a row leaf' style='top:638.53px;width:471px;overflow:hidden'><span class='c' style='left:55.4px;letter-spacing:-0.63px'>RR_00021</span><span class='c' style='left:187.3px;letter-spacing:-0.14px'>Anfrage</span><span class='n' style='right:89.8px;letter-spacing:-0.3px'>25.00</span><span class='n' style='right:6.2px;letter-spacing:-0.3px'>25.00</span><svg class='a' style='left:307.6px;top:6.1px' width='17' height='17' viewBox='0 0 17 17' fill='none' stroke='#b9b9b9' stroke-width='1' stroke-linejoin='miter'><path d='M0.7 16.2 L0.9 12.1 L11.2 1.9 a1.5 1.5 0 0 1 2.1 0 L15 3.6 a1.5 1.5 0 0 1 0 2.1 L4.8 16 Z'/><path d='M9.8 3.7 L13.1 7'/></svg></div><div class='a row leaf' style='top:637.23px;left:471px;width:1333px;overflow:hidden'><svg class='a' style='left:5.8px;top:6.1px' width='17' height='17' viewBox='0 0 17 17' fill='none' stroke='#b9b9b9' stroke-width='1' stroke-linejoin='miter'><path d='M0.7 16.2 L0.9 12.1 L11.2 1.9 a1.5 1.5 0 0 1 2.1 0 L15 3.6 a1.5 1.5 0 0 1 0 2.1 L4.8 16 Z'/><path d='M9.8 3.7 L13.1 7'/></svg><svg class='a' style='left:126.8px;top:6.1px' width='17' height='17' viewBox='0 0 17 17' fill='none' stroke='#b9b9b9' stroke-width='1' stroke-linejoin='miter'><path d='M0.7 16.2 L0.9 12.1 L11.2 1.9 a1.5 1.5 0 0 1 2.1 0 L15 3.6 a1.5 1.5 0 0 1 0 2.1 L4.8 16 Z'/><path d='M9.8 3.7 L13.1 7'/></svg><svg class='a' style='left:247.8px;top:6.1px' width='17' height='17' viewBox='0 0 17 17' fill='none' stroke='#b9b9b9' stroke-width='1' stroke-linejoin='miter'><path d='M0.7 16.2 L0.9 12.1 L11.2 1.9 a1.5 1.5 0 0 1 2.1 0 L15 3.6 a1.5 1.5 0 0 1 0 2.1 L4.8 16 Z'/><path d='M9.8 3.7 L13.1 7'/></svg><svg class='a' style='left:368.8px;top:6.1px' width='17' height='17' viewBox='0 0 17 17' fill='none' stroke='#b9b9b9' stroke-width='1' stroke-linejoin='miter'><path d='M0.7 16.2 L0.9 12.1 L11.2 1.9 a1.5 1.5 0 0 1 2.1 0 L15 3.6 a1.5 1.5 0 0 1 0 2.1 L4.8 16 Z'/><path d='M9.8 3.7 L13.1 7'/></svg><svg class='a' style='left:489.8px;top:6.1px' width='17' height='17' viewBox='0 0 17 17' fill='none' stroke='#b9b9b9' stroke-width='1' stroke-linejoin='miter'><path d='M0.7 16.2 L0.9 12.1 L11.2 1.9 a1.5 1.5 0 0 1 2.1 0 L15 3.6 a1.5 1.5 0 0 1 0 2.1 L4.8 16 Z'/><path d='M9.8 3.7 L13.1 7'/></svg><svg class='a' style='left:610.8px;top:6.1px' width='17' height='17' viewBox='0 0 17 17' fill='none' stroke='#b9b9b9' stroke-width='1' stroke-linejoin='miter'><path d='M0.7 16.2 L0.9 12.1 L11.2 1.9 a1.5 1.5 0 0 1 2.1 0 L15 3.6 a1.5 1.5 0 0 1 0 2.1 L4.8 16 Z'/><path d='M9.8 3.7 L13.1 7'/></svg><svg class='a' style='left:731.8px;top:6.1px' width='17' height='17' viewBox='0 0 17 17' fill='none' stroke='#b9b9b9' stroke-width='1' stroke-linejoin='miter'><path d='M0.7 16.2 L0.9 12.1 L11.2 1.9 a1.5 1.5 0 0 1 2.1 0 L15 3.6 a1.5 1.5 0 0 1 0 2.1 L4.8 16 Z'/><path d='M9.8 3.7 L13.1 7'/></svg><svg class='a' style='left:852.8px;top:6.1px' width='17' height='17' viewBox='0 0 17 17' fill='none' stroke='#b9b9b9' stroke-width='1' stroke-linejoin='miter'><path d='M0.7 16.2 L0.9 12.1 L11.2 1.9 a1.5 1.5 0 0 1 2.1 0 L15 3.6 a1.5 1.5 0 0 1 0 2.1 L4.8 16 Z'/><path d='M9.8 3.7 L13.1 7'/></svg><svg class='a' style='left:973.8px;top:6.1px' width='17' height='17' viewBox='0 0 17 17' fill='none' stroke='#b9b9b9' stroke-width='1' stroke-linejoin='miter'><path d='M0.7 16.2 L0.9 12.1 L11.2 1.9 a1.5 1.5 0 0 1 2.1 0 L15 3.6 a1.5 1.5 0 0 1 0 2.1 L4.8 16 Z'/><path d='M9.8 3.7 L13.1 7'/></svg><svg class='a' style='left:1094.8px;top:6.1px' width='17' height='17' viewBox='0 0 17 17' fill='none' stroke='#b9b9b9' stroke-width='1' stroke-linejoin='miter'><path d='M0.7 16.2 L0.9 12.1 L11.2 1.9 a1.5 1.5 0 0 1 2.1 0 L15 3.6 a1.5 1.5 0 0 1 0 2.1 L4.8 16 Z'/><path d='M9.8 3.7 L13.1 7'/></svg><svg class='a' style='left:1215.8px;top:6.1px' width='17' height='17' viewBox='0 0 17 17' fill='none' stroke='#b9b9b9' stroke-width='1' stroke-linejoin='miter'><path d='M0.7 16.2 L0.9 12.1 L11.2 1.9 a1.5 1.5 0 0 1 2.1 0 L15 3.6 a1.5 1.5 0 0 1 0 2.1 L4.8 16 Z'/><path d='M9.8 3.7 L13.1 7'/></svg><span class='n' style='right:853.7px;letter-spacing:-0.3px'>25.00</span></div>
<div class='a row b' style='top:670px;width:471px;overflow:hidden'><svg class='a' style='left:14.2px;top:8.6px' width='18' height='14' viewBox='0 0 18 14' fill='none' stroke='#111' stroke-width='1.5' stroke-linecap='round'><path d='M6.6 2.2 H16.4 M6.6 7.2 H16.4 M6.6 12.2 H16.4' stroke-linecap='butt'/><path d='M0.9 2.2 L2.2 3.6 L4.6 0.8 M0.9 7.2 L2.2 8.6 L4.6 5.8' stroke-width='1.3' stroke-linejoin='round'/><circle cx='2.6' cy='12.2' r='1.4' fill='#111' stroke='none'/></svg><span class='c' style='left:36.4px;letter-spacing:-0.44px'>Erstellen eines ...</span><span class='a' style='left:164px;top:14.6px;width:12px;height:2.2px;background:#111'></span><span class='c' style='left:187.3px;letter-spacing:-0.54px'>Commitment</span><span class='n' style='right:89.8px;letter-spacing:0.01px'>40.00</span><span class='n' style='right:6.2px;letter-spacing:0.01px'>40.00</span><svg class='a' style='left:307.6px;top:6.1px' width='17' height='17' viewBox='0 0 17 17' fill='none' stroke='#b9b9b9' stroke-width='1' stroke-linejoin='miter'><path d='M0.7 16.2 L0.9 12.1 L11.2 1.9 a1.5 1.5 0 0 1 2.1 0 L15 3.6 a1.5 1.5 0 0 1 0 2.1 L4.8 16 Z'/><path d='M9.8 3.7 L13.1 7'/></svg></div><div class='a row b' style='top:668.7px;left:471px;width:1333px;overflow:hidden'><svg class='a' style='left:5.8px;top:6.1px' width='17' height='17' viewBox='0 0 17 17' fill='none' stroke='#b9b9b9' stroke-width='1' stroke-linejoin='miter'><path d='M0.7 16.2 L0.9 12.1 L11.2 1.9 a1.5 1.5 0 0 1 2.1 0 L15 3.6 a1.5 1.5 0 0 1 0 2.1 L4.8 16 Z'/><path d='M9.8 3.7 L13.1 7'/></svg><svg class='a' style='left:126.8px;top:6.1px' width='17' height='17' viewBox='0 0 17 17' fill='none' stroke='#b9b9b9' stroke-width='1' stroke-linejoin='miter'><path d='M0.7 16.2 L0.9 12.1 L11.2 1.9 a1.5 1.5 0 0 1 2.1 0 L15 3.6 a1.5 1.5 0 0 1 0 2.1 L4.8 16 Z'/><path d='M9.8 3.7 L13.1 7'/></svg><svg class='a' style='left:247.8px;top:6.1px' width='17' height='17' viewBox='0 0 17 17' fill='none' stroke='#b9b9b9' stroke-width='1' stroke-linejoin='miter'><path d='M0.7 16.2 L0.9 12.1 L11.2 1.9 a1.5 1.5 0 0 1 2.1 0 L15 3.6 a1.5 1.5 0 0 1 0 2.1 L4.8 16 Z'/><path d='M9.8 3.7 L13.1 7'/></svg><svg class='a' style='left:368.8px;top:6.1px' width='17' height='17' viewBox='0 0 17 17' fill='none' stroke='#b9b9b9' stroke-width='1' stroke-linejoin='miter'><path d='M0.7 16.2 L0.9 12.1 L11.2 1.9 a1.5 1.5 0 0 1 2.1 0 L15 3.6 a1.5 1.5 0 0 1 0 2.1 L4.8 16 Z'/><path d='M9.8 3.7 L13.1 7'/></svg><svg class='a' style='left:489.8px;top:6.1px' width='17' height='17' viewBox='0 0 17 17' fill='none' stroke='#b9b9b9' stroke-width='1' stroke-linejoin='miter'><path d='M0.7 16.2 L0.9 12.1 L11.2 1.9 a1.5 1.5 0 0 1 2.1 0 L15 3.6 a1.5 1.5 0 0 1 0 2.1 L4.8 16 Z'/><path d='M9.8 3.7 L13.1 7'/></svg><svg class='a' style='left:610.8px;top:6.1px' width='17' height='17' viewBox='0 0 17 17' fill='none' stroke='#b9b9b9' stroke-width='1' stroke-linejoin='miter'><path d='M0.7 16.2 L0.9 12.1 L11.2 1.9 a1.5 1.5 0 0 1 2.1 0 L15 3.6 a1.5 1.5 0 0 1 0 2.1 L4.8 16 Z'/><path d='M9.8 3.7 L13.1 7'/></svg><svg class='a' style='left:731.8px;top:6.1px' width='17' height='17' viewBox='0 0 17 17' fill='none' stroke='#b9b9b9' stroke-width='1' stroke-linejoin='miter'><path d='M0.7 16.2 L0.9 12.1 L11.2 1.9 a1.5 1.5 0 0 1 2.1 0 L15 3.6 a1.5 1.5 0 0 1 0 2.1 L4.8 16 Z'/><path d='M9.8 3.7 L13.1 7'/></svg><svg class='a' style='left:852.8px;top:6.1px' width='17' height='17' viewBox='0 0 17 17' fill='none' stroke='#b9b9b9' stroke-width='1' stroke-linejoin='miter'><path d='M0.7 16.2 L0.9 12.1 L11.2 1.9 a1.5 1.5 0 0 1 2.1 0 L15 3.6 a1.5 1.5 0 0 1 0 2.1 L4.8 16 Z'/><path d='M9.8 3.7 L13.1 7'/></svg><svg class='a' style='left:973.8px;top:6.1px' width='17' height='17' viewBox='0 0 17 17' fill='none' stroke='#b9b9b9' stroke-width='1' stroke-linejoin='miter'><path d='M0.7 16.2 L0.9 12.1 L11.2 1.9 a1.5 1.5 0 0 1 2.1 0 L15 3.6 a1.5 1.5 0 0 1 0 2.1 L4.8 16 Z'/><path d='M9.8 3.7 L13.1 7'/></svg><svg class='a' style='left:1094.8px;top:6.1px' width='17' height='17' viewBox='0 0 17 17' fill='none' stroke='#b9b9b9' stroke-width='1' stroke-linejoin='miter'><path d='M0.7 16.2 L0.9 12.1 L11.2 1.9 a1.5 1.5 0 0 1 2.1 0 L15 3.6 a1.5 1.5 0 0 1 0 2.1 L4.8 16 Z'/><path d='M9.8 3.7 L13.1 7'/></svg><svg class='a' style='left:1215.8px;top:6.1px' width='17' height='17' viewBox='0 0 17 17' fill='none' stroke='#b9b9b9' stroke-width='1' stroke-linejoin='miter'><path d='M0.7 16.2 L0.9 12.1 L11.2 1.9 a1.5 1.5 0 0 1 2.1 0 L15 3.6 a1.5 1.5 0 0 1 0 2.1 L4.8 16 Z'/><path d='M9.8 3.7 L13.1 7'/></svg><span class='n' style='right:853.7px;letter-spacing:0.01px'>26.67</span><span class='n' style='right:732.7px;letter-spacing:0.01px'>13.33</span></div>
<div class='a row b' style='top:701.47px;width:471px;overflow:hidden'><span class='c' style='left:187.3px;letter-spacing:-0.64px'>Anfrage</span><span class='n' style='right:89.8px;letter-spacing:0.01px'>65.00</span><span class='n' style='right:6.2px;letter-spacing:0.01px'>65.00</span><svg class='a' style='left:307.6px;top:6.1px' width='17' height='17' viewBox='0 0 17 17' fill='none' stroke='#b9b9b9' stroke-width='1' stroke-linejoin='miter'><path d='M0.7 16.2 L0.9 12.1 L11.2 1.9 a1.5 1.5 0 0 1 2.1 0 L15 3.6 a1.5 1.5 0 0 1 0 2.1 L4.8 16 Z'/><path d='M9.8 3.7 L13.1 7'/></svg></div><div class='a row b' style='top:700.17px;left:471px;width:1333px;overflow:hidden'><svg class='a' style='left:5.8px;top:6.1px' width='17' height='17' viewBox='0 0 17 17' fill='none' stroke='#b9b9b9' stroke-width='1' stroke-linejoin='miter'><path d='M0.7 16.2 L0.9 12.1 L11.2 1.9 a1.5 1.5 0 0 1 2.1 0 L15 3.6 a1.5 1.5 0 0 1 0 2.1 L4.8 16 Z'/><path d='M9.8 3.7 L13.1 7'/></svg><svg class='a' style='left:126.8px;top:6.1px' width='17' height='17' viewBox='0 0 17 17' fill='none' stroke='#b9b9b9' stroke-width='1' stroke-linejoin='miter'><path d='M0.7 16.2 L0.9 12.1 L11.2 1.9 a1.5 1.5 0 0 1 2.1 0 L15 3.6 a1.5 1.5 0 0 1 0 2.1 L4.8 16 Z'/><path d='M9.8 3.7 L13.1 7'/></svg><svg class='a' style='left:247.8px;top:6.1px' width='17' height='17' viewBox='0 0 17 17' fill='none' stroke='#b9b9b9' stroke-width='1' stroke-linejoin='miter'><path d='M0.7 16.2 L0.9 12.1 L11.2 1.9 a1.5 1.5 0 0 1 2.1 0 L15 3.6 a1.5 1.5 0 0 1 0 2.1 L4.8 16 Z'/><path d='M9.8 3.7 L13.1 7'/></svg><svg class='a' style='left:368.8px;top:6.1px' width='17' height='17' viewBox='0 0 17 17' fill='none' stroke='#b9b9b9' stroke-width='1' stroke-linejoin='miter'><path d='M0.7 16.2 L0.9 12.1 L11.2 1.9 a1.5 1.5 0 0 1 2.1 0 L15 3.6 a1.5 1.5 0 0 1 0 2.1 L4.8 16 Z'/><path d='M9.8 3.7 L13.1 7'/></svg><svg class='a' style='left:489.8px;top:6.1px' width='17' height='17' viewBox='0 0 17 17' fill='none' stroke='#b9b9b9' stroke-width='1' stroke-linejoin='miter'><path d='M0.7 16.2 L0.9 12.1 L11.2 1.9 a1.5 1.5 0 0 1 2.1 0 L15 3.6 a1.5 1.5 0 0 1 0 2.1 L4.8 16 Z'/><path d='M9.8 3.7 L13.1 7'/></svg><svg class='a' style='left:610.8px;top:6.1px' width='17' height='17' viewBox='0 0 17 17' fill='none' stroke='#b9b9b9' stroke-width='1' stroke-linejoin='miter'><path d='M0.7 16.2 L0.9 12.1 L11.2 1.9 a1.5 1.5 0 0 1 2.1 0 L15 3.6 a1.5 1.5 0 0 1 0 2.1 L4.8 16 Z'/><path d='M9.8 3.7 L13.1 7'/></svg><svg class='a' style='left:731.8px;top:6.1px' width='17' height='17' viewBox='0 0 17 17' fill='none' stroke='#b9b9b9' stroke-width='1' stroke-linejoin='miter'><path d='M0.7 16.2 L0.9 12.1 L11.2 1.9 a1.5 1.5 0 0 1 2.1 0 L15 3.6 a1.5 1.5 0 0 1 0 2.1 L4.8 16 Z'/><path d='M9.8 3.7 L13.1 7'/></svg><svg class='a' style='left:852.8px;top:6.1px' width='17' height='17' viewBox='0 0 17 17' fill='none' stroke='#b9b9b9' stroke-width='1' stroke-linejoin='miter'><path d='M0.7 16.2 L0.9 12.1 L11.2 1.9 a1.5 1.5 0 0 1 2.1 0 L15 3.6 a1.5 1.5 0 0 1 0 2.1 L4.8 16 Z'/><path d='M9.8 3.7 L13.1 7'/></svg><svg class='a' style='left:973.8px;top:6.1px' width='17' height='17' viewBox='0 0 17 17' fill='none' stroke='#b9b9b9' stroke-width='1' stroke-linejoin='miter'><path d='M0.7 16.2 L0.9 12.1 L11.2 1.9 a1.5 1.5 0 0 1 2.1 0 L15 3.6 a1.5 1.5 0 0 1 0 2.1 L4.8 16 Z'/><path d='M9.8 3.7 L13.1 7'/></svg><svg class='a' style='left:1094.8px;top:6.1px' width='17' height='17' viewBox='0 0 17 17' fill='none' stroke='#b9b9b9' stroke-width='1' stroke-linejoin='miter'><path d='M0.7 16.2 L0.9 12.1 L11.2 1.9 a1.5 1.5 0 0 1 2.1 0 L15 3.6 a1.5 1.5 0 0 1 0 2.1 L4.8 16 Z'/><path d='M9.8 3.7 L13.1 7'/></svg><svg class='a' style='left:1215.8px;top:6.1px' width='17' height='17' viewBox='0 0 17 17' fill='none' stroke='#b9b9b9' stroke-width='1' stroke-linejoin='miter'><path d='M0.7 16.2 L0.9 12.1 L11.2 1.9 a1.5 1.5 0 0 1 2.1 0 L15 3.6 a1.5 1.5 0 0 1 0 2.1 L4.8 16 Z'/><path d='M9.8 3.7 L13.1 7'/></svg><span class='n' style='right:1095.7px;letter-spacing:0.01px'>15.00</span><span class='n' style='right:853.7px;letter-spacing:0.01px'>25.00</span><span class='n' style='right:732.7px;letter-spacing:0.01px'>25.00</span></div>
<div class='a row ' style='top:732.94px;width:471px;overflow:hidden'><svg class='a' style='left:33.2px;top:9px' width='15' height='14.4' viewBox='0 0 15 14.4' fill='none' stroke='#111' stroke-width='1.5' stroke-linejoin='round'><rect x='0.9' y='0.9' width='13.2' height='12.6' rx='2.2'/><path d='M3.4 4.4 H11.6 M3.4 7.6 H8' stroke-linecap='butt'/><path d='M10 7.4 L12.4 9.8 L10 12.2 L7.6 9.8 Z' fill='#111' stroke='none'/></svg><span class='c' style='left:54.6px;letter-spacing:-0.16px'>Puente de la...</span><span class='a' style='left:164px;top:14.6px;width:12px;height:2.2px;background:#111'></span><span class='c' style='left:187.3px;letter-spacing:0.15px'>Commitment</span><span class='n' style='right:89.8px;letter-spacing:-0.3px'>40.00</span><span class='n' style='right:6.2px;letter-spacing:-0.3px'>40.00</span><svg class='a' style='left:307.6px;top:6.1px' width='17' height='17' viewBox='0 0 17 17' fill='none' stroke='#b9b9b9' stroke-width='1' stroke-linejoin='miter'><path d='M0.7 16.2 L0.9 12.1 L11.2 1.9 a1.5 1.5 0 0 1 2.1 0 L15 3.6 a1.5 1.5 0 0 1 0 2.1 L4.8 16 Z'/><path d='M9.8 3.7 L13.1 7'/></svg></div><div class='a row ' style='top:731.64px;left:471px;width:1333px;overflow:hidden'><svg class='a' style='left:5.8px;top:6.1px' width='17' height='17' viewBox='0 0 17 17' fill='none' stroke='#b9b9b9' stroke-width='1' stroke-linejoin='miter'><path d='M0.7 16.2 L0.9 12.1 L11.2 1.9 a1.5 1.5 0 0 1 2.1 0 L15 3.6 a1.5 1.5 0 0 1 0 2.1 L4.8 16 Z'/><path d='M9.8 3.7 L13.1 7'/></svg><svg class='a' style='left:126.8px;top:6.1px' width='17' height='17' viewBox='0 0 17 17' fill='none' stroke='#b9b9b9' stroke-width='1' stroke-linejoin='miter'><path d='M0.7 16.2 L0.9 12.1 L11.2 1.9 a1.5 1.5 0 0 1 2.1 0 L15 3.6 a1.5 1.5 0 0 1 0 2.1 L4.8 16 Z'/><path d='M9.8 3.7 L13.1 7'/></svg><svg class='a' style='left:247.8px;top:6.1px' width='17' height='17' viewBox='0 0 17 17' fill='none' stroke='#b9b9b9' stroke-width='1' stroke-linejoin='miter'><path d='M0.7 16.2 L0.9 12.1 L11.2 1.9 a1.5 1.5 0 0 1 2.1 0 L15 3.6 a1.5 1.5 0 0 1 0 2.1 L4.8 16 Z'/><path d='M9.8 3.7 L13.1 7'/></svg><svg class='a' style='left:368.8px;top:6.1px' width='17' height='17' viewBox='0 0 17 17' fill='none' stroke='#b9b9b9' stroke-width='1' stroke-linejoin='miter'><path d='M0.7 16.2 L0.9 12.1 L11.2 1.9 a1.5 1.5 0 0 1 2.1 0 L15 3.6 a1.5 1.5 0 0 1 0 2.1 L4.8 16 Z'/><path d='M9.8 3.7 L13.1 7'/></svg><svg class='a' style='left:489.8px;top:6.1px' width='17' height='17' viewBox='0 0 17 17' fill='none' stroke='#b9b9b9' stroke-width='1' stroke-linejoin='miter'><path d='M0.7 16.2 L0.9 12.1 L11.2 1.9 a1.5 1.5 0 0 1 2.1 0 L15 3.6 a1.5 1.5 0 0 1 0 2.1 L4.8 16 Z'/><path d='M9.8 3.7 L13.1 7'/></svg><svg class='a' style='left:610.8px;top:6.1px' width='17' height='17' viewBox='0 0 17 17' fill='none' stroke='#b9b9b9' stroke-width='1' stroke-linejoin='miter'><path d='M0.7 16.2 L0.9 12.1 L11.2 1.9 a1.5 1.5 0 0 1 2.1 0 L15 3.6 a1.5 1.5 0 0 1 0 2.1 L4.8 16 Z'/><path d='M9.8 3.7 L13.1 7'/></svg><svg class='a' style='left:731.8px;top:6.1px' width='17' height='17' viewBox='0 0 17 17' fill='none' stroke='#b9b9b9' stroke-width='1' stroke-linejoin='miter'><path d='M0.7 16.2 L0.9 12.1 L11.2 1.9 a1.5 1.5 0 0 1 2.1 0 L15 3.6 a1.5 1.5 0 0 1 0 2.1 L4.8 16 Z'/><path d='M9.8 3.7 L13.1 7'/></svg><svg class='a' style='left:852.8px;top:6.1px' width='17' height='17' viewBox='0 0 17 17' fill='none' stroke='#b9b9b9' stroke-width='1' stroke-linejoin='miter'><path d='M0.7 16.2 L0.9 12.1 L11.2 1.9 a1.5 1.5 0 0 1 2.1 0 L15 3.6 a1.5 1.5 0 0 1 0 2.1 L4.8 16 Z'/><path d='M9.8 3.7 L13.1 7'/></svg><svg class='a' style='left:973.8px;top:6.1px' width='17' height='17' viewBox='0 0 17 17' fill='none' stroke='#b9b9b9' stroke-width='1' stroke-linejoin='miter'><path d='M0.7 16.2 L0.9 12.1 L11.2 1.9 a1.5 1.5 0 0 1 2.1 0 L15 3.6 a1.5 1.5 0 0 1 0 2.1 L4.8 16 Z'/><path d='M9.8 3.7 L13.1 7'/></svg><svg class='a' style='left:1094.8px;top:6.1px' width='17' height='17' viewBox='0 0 17 17' fill='none' stroke='#b9b9b9' stroke-width='1' stroke-linejoin='miter'><path d='M0.7 16.2 L0.9 12.1 L11.2 1.9 a1.5 1.5 0 0 1 2.1 0 L15 3.6 a1.5 1.5 0 0 1 0 2.1 L4.8 16 Z'/><path d='M9.8 3.7 L13.1 7'/></svg><svg class='a' style='left:1215.8px;top:6.1px' width='17' height='17' viewBox='0 0 17 17' fill='none' stroke='#b9b9b9' stroke-width='1' stroke-linejoin='miter'><path d='M0.7 16.2 L0.9 12.1 L11.2 1.9 a1.5 1.5 0 0 1 2.1 0 L15 3.6 a1.5 1.5 0 0 1 0 2.1 L4.8 16 Z'/><path d='M9.8 3.7 L13.1 7'/></svg><span class='n' style='right:853.7px;letter-spacing:-0.3px'>26.67</span><span class='n' style='right:732.7px;letter-spacing:-0.3px'>13.33</span></div>
<div class='a row ' style='top:764.41px;width:471px;overflow:hidden'><span class='c' style='left:187.3px;letter-spacing:-0.14px'>Anfrage</span><span class='n' style='right:89.8px;letter-spacing:-0.3px'>65.00</span><span class='n' style='right:6.2px;letter-spacing:-0.3px'>65.00</span><svg class='a' style='left:307.6px;top:6.1px' width='17' height='17' viewBox='0 0 17 17' fill='none' stroke='#b9b9b9' stroke-width='1' stroke-linejoin='miter'><path d='M0.7 16.2 L0.9 12.1 L11.2 1.9 a1.5 1.5 0 0 1 2.1 0 L15 3.6 a1.5 1.5 0 0 1 0 2.1 L4.8 16 Z'/><path d='M9.8 3.7 L13.1 7'/></svg></div><div class='a row ' style='top:763.11px;left:471px;width:1333px;overflow:hidden'><svg class='a' style='left:5.8px;top:6.1px' width='17' height='17' viewBox='0 0 17 17' fill='none' stroke='#b9b9b9' stroke-width='1' stroke-linejoin='miter'><path d='M0.7 16.2 L0.9 12.1 L11.2 1.9 a1.5 1.5 0 0 1 2.1 0 L15 3.6 a1.5 1.5 0 0 1 0 2.1 L4.8 16 Z'/><path d='M9.8 3.7 L13.1 7'/></svg><svg class='a' style='left:126.8px;top:6.1px' width='17' height='17' viewBox='0 0 17 17' fill='none' stroke='#b9b9b9' stroke-width='1' stroke-linejoin='miter'><path d='M0.7 16.2 L0.9 12.1 L11.2 1.9 a1.5 1.5 0 0 1 2.1 0 L15 3.6 a1.5 1.5 0 0 1 0 2.1 L4.8 16 Z'/><path d='M9.8 3.7 L13.1 7'/></svg><svg class='a' style='left:247.8px;top:6.1px' width='17' height='17' viewBox='0 0 17 17' fill='none' stroke='#b9b9b9' stroke-width='1' stroke-linejoin='miter'><path d='M0.7 16.2 L0.9 12.1 L11.2 1.9 a1.5 1.5 0 0 1 2.1 0 L15 3.6 a1.5 1.5 0 0 1 0 2.1 L4.8 16 Z'/><path d='M9.8 3.7 L13.1 7'/></svg><svg class='a' style='left:368.8px;top:6.1px' width='17' height='17' viewBox='0 0 17 17' fill='none' stroke='#b9b9b9' stroke-width='1' stroke-linejoin='miter'><path d='M0.7 16.2 L0.9 12.1 L11.2 1.9 a1.5 1.5 0 0 1 2.1 0 L15 3.6 a1.5 1.5 0 0 1 0 2.1 L4.8 16 Z'/><path d='M9.8 3.7 L13.1 7'/></svg><svg class='a' style='left:489.8px;top:6.1px' width='17' height='17' viewBox='0 0 17 17' fill='none' stroke='#b9b9b9' stroke-width='1' stroke-linejoin='miter'><path d='M0.7 16.2 L0.9 12.1 L11.2 1.9 a1.5 1.5 0 0 1 2.1 0 L15 3.6 a1.5 1.5 0 0 1 0 2.1 L4.8 16 Z'/><path d='M9.8 3.7 L13.1 7'/></svg><svg class='a' style='left:610.8px;top:6.1px' width='17' height='17' viewBox='0 0 17 17' fill='none' stroke='#b9b9b9' stroke-width='1' stroke-linejoin='miter'><path d='M0.7 16.2 L0.9 12.1 L11.2 1.9 a1.5 1.5 0 0 1 2.1 0 L15 3.6 a1.5 1.5 0 0 1 0 2.1 L4.8 16 Z'/><path d='M9.8 3.7 L13.1 7'/></svg><svg class='a' style='left:731.8px;top:6.1px' width='17' height='17' viewBox='0 0 17 17' fill='none' stroke='#b9b9b9' stroke-width='1' stroke-linejoin='miter'><path d='M0.7 16.2 L0.9 12.1 L11.2 1.9 a1.5 1.5 0 0 1 2.1 0 L15 3.6 a1.5 1.5 0 0 1 0 2.1 L4.8 16 Z'/><path d='M9.8 3.7 L13.1 7'/></svg><svg class='a' style='left:852.8px;top:6.1px' width='17' height='17' viewBox='0 0 17 17' fill='none' stroke='#b9b9b9' stroke-width='1' stroke-linejoin='miter'><path d='M0.7 16.2 L0.9 12.1 L11.2 1.9 a1.5 1.5 0 0 1 2.1 0 L15 3.6 a1.5 1.5 0 0 1 0 2.1 L4.8 16 Z'/><path d='M9.8 3.7 L13.1 7'/></svg><svg class='a' style='left:973.8px;top:6.1px' width='17' height='17' viewBox='0 0 17 17' fill='none' stroke='#b9b9b9' stroke-width='1' stroke-linejoin='miter'><path d='M0.7 16.2 L0.9 12.1 L11.2 1.9 a1.5 1.5 0 0 1 2.1 0 L15 3.6 a1.5 1.5 0 0 1 0 2.1 L4.8 16 Z'/><path d='M9.8 3.7 L13.1 7'/></svg><svg class='a' style='left:1094.8px;top:6.1px' width='17' height='17' viewBox='0 0 17 17' fill='none' stroke='#b9b9b9' stroke-width='1' stroke-linejoin='miter'><path d='M0.7 16.2 L0.9 12.1 L11.2 1.9 a1.5 1.5 0 0 1 2.1 0 L15 3.6 a1.5 1.5 0 0 1 0 2.1 L4.8 16 Z'/><path d='M9.8 3.7 L13.1 7'/></svg><svg class='a' style='left:1215.8px;top:6.1px' width='17' height='17' viewBox='0 0 17 17' fill='none' stroke='#b9b9b9' stroke-width='1' stroke-linejoin='miter'><path d='M0.7 16.2 L0.9 12.1 L11.2 1.9 a1.5 1.5 0 0 1 2.1 0 L15 3.6 a1.5 1.5 0 0 1 0 2.1 L4.8 16 Z'/><path d='M9.8 3.7 L13.1 7'/></svg><span class='n' style='right:1095.7px;letter-spacing:-0.3px'>15.00</span><span class='n' style='right:853.7px;letter-spacing:-0.3px'>25.00</span><span class='n' style='right:732.7px;letter-spacing:-0.3px'>25.00</span></div>
<div class='a row ' style='top:795.88px;width:471px;overflow:hidden'><svg class='a' style='left:44.4px;top:9.6px' width='17' height='13' viewBox='0 0 17 13'><path d='M1.6 0.4 H6 L7.8 2.2 H15.2 A1.3 1.3 0 0 1 16.5 3.5 V11.2 A1.3 1.3 0 0 1 15.2 12.5 H1.8 A1.3 1.3 0 0 1 0.5 11.2 V1.6 A1.2 1.2 0 0 1 1.6 0.4 Z' fill='#050505'/></svg><span class='c' style='left:67px;letter-spacing:-0.32px'>Reparatur ...</span><span class='a' style='left:164px;top:14.6px;width:12px;height:2.2px;background:#111'></span><span class='c' style='left:187.3px;letter-spacing:0.15px'>Commitment</span><span class='n' style='right:89.8px;letter-spacing:-0.3px'>40.00</span><span class='n' style='right:6.2px;letter-spacing:-0.3px'>40.00</span><svg class='a' style='left:307.6px;top:6.1px' width='17' height='17' viewBox='0 0 17 17' fill='none' stroke='#b9b9b9' stroke-width='1' stroke-linejoin='miter'><path d='M0.7 16.2 L0.9 12.1 L11.2 1.9 a1.5 1.5 0 0 1 2.1 0 L15 3.6 a1.5 1.5 0 0 1 0 2.1 L4.8 16 Z'/><path d='M9.8 3.7 L13.1 7'/></svg></div><div class='a row ' style='top:794.58px;left:471px;width:1333px;overflow:hidden'><svg class='a' style='left:5.8px;top:6.1px' width='17' height='17' viewBox='0 0 17 17' fill='none' stroke='#b9b9b9' stroke-width='1' stroke-linejoin='miter'><path d='M0.7 16.2 L0.9 12.1 L11.2 1.9 a1.5 1.5 0 0 1 2.1 0 L15 3.6 a1.5 1.5 0 0 1 0 2.1 L4.8 16 Z'/><path d='M9.8 3.7 L13.1 7'/></svg><svg class='a' style='left:126.8px;top:6.1px' width='17' height='17' viewBox='0 0 17 17' fill='none' stroke='#b9b9b9' stroke-width='1' stroke-linejoin='miter'><path d='M0.7 16.2 L0.9 12.1 L11.2 1.9 a1.5 1.5 0 0 1 2.1 0 L15 3.6 a1.5 1.5 0 0 1 0 2.1 L4.8 16 Z'/><path d='M9.8 3.7 L13.1 7'/></svg><svg class='a' style='left:247.8px;top:6.1px' width='17' height='17' viewBox='0 0 17 17' fill='none' stroke='#b9b9b9' stroke-width='1' stroke-linejoin='miter'><path d='M0.7 16.2 L0.9 12.1 L11.2 1.9 a1.5 1.5 0 0 1 2.1 0 L15 3.6 a1.5 1.5 0 0 1 0 2.1 L4.8 16 Z'/><path d='M9.8 3.7 L13.1 7'/></svg><svg class='a' style='left:368.8px;top:6.1px' width='17' height='17' viewBox='0 0 17 17' fill='none' stroke='#b9b9b9' stroke-width='1' stroke-linejoin='miter'><path d='M0.7 16.2 L0.9 12.1 L11.2 1.9 a1.5 1.5 0 0 1 2.1 0 L15 3.6 a1.5 1.5 0 0 1 0 2.1 L4.8 16 Z'/><path d='M9.8 3.7 L13.1 7'/></svg><svg class='a' style='left:489.8px;top:6.1px' width='17' height='17' viewBox='0 0 17 17' fill='none' stroke='#b9b9b9' stroke-width='1' stroke-linejoin='miter'><path d='M0.7 16.2 L0.9 12.1 L11.2 1.9 a1.5 1.5 0 0 1 2.1 0 L15 3.6 a1.5 1.5 0 0 1 0 2.1 L4.8 16 Z'/><path d='M9.8 3.7 L13.1 7'/></svg><svg class='a' style='left:610.8px;top:6.1px' width='17' height='17' viewBox='0 0 17 17' fill='none' stroke='#b9b9b9' stroke-width='1' stroke-linejoin='miter'><path d='M0.7 16.2 L0.9 12.1 L11.2 1.9 a1.5 1.5 0 0 1 2.1 0 L15 3.6 a1.5 1.5 0 0 1 0 2.1 L4.8 16 Z'/><path d='M9.8 3.7 L13.1 7'/></svg><svg class='a' style='left:731.8px;top:6.1px' width='17' height='17' viewBox='0 0 17 17' fill='none' stroke='#b9b9b9' stroke-width='1' stroke-linejoin='miter'><path d='M0.7 16.2 L0.9 12.1 L11.2 1.9 a1.5 1.5 0 0 1 2.1 0 L15 3.6 a1.5 1.5 0 0 1 0 2.1 L4.8 16 Z'/><path d='M9.8 3.7 L13.1 7'/></svg><svg class='a' style='left:852.8px;top:6.1px' width='17' height='17' viewBox='0 0 17 17' fill='none' stroke='#b9b9b9' stroke-width='1' stroke-linejoin='miter'><path d='M0.7 16.2 L0.9 12.1 L11.2 1.9 a1.5 1.5 0 0 1 2.1 0 L15 3.6 a1.5 1.5 0 0 1 0 2.1 L4.8 16 Z'/><path d='M9.8 3.7 L13.1 7'/></svg><svg class='a' style='left:973.8px;top:6.1px' width='17' height='17' viewBox='0 0 17 17' fill='none' stroke='#b9b9b9' stroke-width='1' stroke-linejoin='miter'><path d='M0.7 16.2 L0.9 12.1 L11.2 1.9 a1.5 1.5 0 0 1 2.1 0 L15 3.6 a1.5 1.5 0 0 1 0 2.1 L4.8 16 Z'/><path d='M9.8 3.7 L13.1 7'/></svg><svg class='a' style='left:1094.8px;top:6.1px' width='17' height='17' viewBox='0 0 17 17' fill='none' stroke='#b9b9b9' stroke-width='1' stroke-linejoin='miter'><path d='M0.7 16.2 L0.9 12.1 L11.2 1.9 a1.5 1.5 0 0 1 2.1 0 L15 3.6 a1.5 1.5 0 0 1 0 2.1 L4.8 16 Z'/><path d='M9.8 3.7 L13.1 7'/></svg><svg class='a' style='left:1215.8px;top:6.1px' width='17' height='17' viewBox='0 0 17 17' fill='none' stroke='#b9b9b9' stroke-width='1' stroke-linejoin='miter'><path d='M0.7 16.2 L0.9 12.1 L11.2 1.9 a1.5 1.5 0 0 1 2.1 0 L15 3.6 a1.5 1.5 0 0 1 0 2.1 L4.8 16 Z'/><path d='M9.8 3.7 L13.1 7'/></svg><span class='n' style='right:853.7px;letter-spacing:-0.3px'>26.67</span><span class='n' style='right:732.7px;letter-spacing:-0.3px'>13.33</span></div>
<div class='a row ' style='top:827.35px;width:471px;overflow:hidden'><span class='c' style='left:187.3px;letter-spacing:-0.14px'>Anfrage</span><span class='n' style='right:89.8px;letter-spacing:-0.3px'>65.00</span><span class='n' style='right:6.2px;letter-spacing:-0.3px'>65.00</span><svg class='a' style='left:307.6px;top:6.1px' width='17' height='17' viewBox='0 0 17 17' fill='none' stroke='#b9b9b9' stroke-width='1' stroke-linejoin='miter'><path d='M0.7 16.2 L0.9 12.1 L11.2 1.9 a1.5 1.5 0 0 1 2.1 0 L15 3.6 a1.5 1.5 0 0 1 0 2.1 L4.8 16 Z'/><path d='M9.8 3.7 L13.1 7'/></svg></div><div class='a row ' style='top:826.05px;left:471px;width:1333px;overflow:hidden'><svg class='a' style='left:5.8px;top:6.1px' width='17' height='17' viewBox='0 0 17 17' fill='none' stroke='#b9b9b9' stroke-width='1' stroke-linejoin='miter'><path d='M0.7 16.2 L0.9 12.1 L11.2 1.9 a1.5 1.5 0 0 1 2.1 0 L15 3.6 a1.5 1.5 0 0 1 0 2.1 L4.8 16 Z'/><path d='M9.8 3.7 L13.1 7'/></svg><svg class='a' style='left:126.8px;top:6.1px' width='17' height='17' viewBox='0 0 17 17' fill='none' stroke='#b9b9b9' stroke-width='1' stroke-linejoin='miter'><path d='M0.7 16.2 L0.9 12.1 L11.2 1.9 a1.5 1.5 0 0 1 2.1 0 L15 3.6 a1.5 1.5 0 0 1 0 2.1 L4.8 16 Z'/><path d='M9.8 3.7 L13.1 7'/></svg><svg class='a' style='left:247.8px;top:6.1px' width='17' height='17' viewBox='0 0 17 17' fill='none' stroke='#b9b9b9' stroke-width='1' stroke-linejoin='miter'><path d='M0.7 16.2 L0.9 12.1 L11.2 1.9 a1.5 1.5 0 0 1 2.1 0 L15 3.6 a1.5 1.5 0 0 1 0 2.1 L4.8 16 Z'/><path d='M9.8 3.7 L13.1 7'/></svg><svg class='a' style='left:368.8px;top:6.1px' width='17' height='17' viewBox='0 0 17 17' fill='none' stroke='#b9b9b9' stroke-width='1' stroke-linejoin='miter'><path d='M0.7 16.2 L0.9 12.1 L11.2 1.9 a1.5 1.5 0 0 1 2.1 0 L15 3.6 a1.5 1.5 0 0 1 0 2.1 L4.8 16 Z'/><path d='M9.8 3.7 L13.1 7'/></svg><svg class='a' style='left:489.8px;top:6.1px' width='17' height='17' viewBox='0 0 17 17' fill='none' stroke='#b9b9b9' stroke-width='1' stroke-linejoin='miter'><path d='M0.7 16.2 L0.9 12.1 L11.2 1.9 a1.5 1.5 0 0 1 2.1 0 L15 3.6 a1.5 1.5 0 0 1 0 2.1 L4.8 16 Z'/><path d='M9.8 3.7 L13.1 7'/></svg><svg class='a' style='left:610.8px;top:6.1px' width='17' height='17' viewBox='0 0 17 17' fill='none' stroke='#b9b9b9' stroke-width='1' stroke-linejoin='miter'><path d='M0.7 16.2 L0.9 12.1 L11.2 1.9 a1.5 1.5 0 0 1 2.1 0 L15 3.6 a1.5 1.5 0 0 1 0 2.1 L4.8 16 Z'/><path d='M9.8 3.7 L13.1 7'/></svg><svg class='a' style='left:731.8px;top:6.1px' width='17' height='17' viewBox='0 0 17 17' fill='none' stroke='#b9b9b9' stroke-width='1' stroke-linejoin='miter'><path d='M0.7 16.2 L0.9 12.1 L11.2 1.9 a1.5 1.5 0 0 1 2.1 0 L15 3.6 a1.5 1.5 0 0 1 0 2.1 L4.8 16 Z'/><path d='M9.8 3.7 L13.1 7'/></svg><svg class='a' style='left:852.8px;top:6.1px' width='17' height='17' viewBox='0 0 17 17' fill='none' stroke='#b9b9b9' stroke-width='1' stroke-linejoin='miter'><path d='M0.7 16.2 L0.9 12.1 L11.2 1.9 a1.5 1.5 0 0 1 2.1 0 L15 3.6 a1.5 1.5 0 0 1 0 2.1 L4.8 16 Z'/><path d='M9.8 3.7 L13.1 7'/></svg><svg class='a' style='left:973.8px;top:6.1px' width='17' height='17' viewBox='0 0 17 17' fill='none' stroke='#b9b9b9' stroke-width='1' stroke-linejoin='miter'><path d='M0.7 16.2 L0.9 12.1 L11.2 1.9 a1.5 1.5 0 0 1 2.1 0 L15 3.6 a1.5 1.5 0 0 1 0 2.1 L4.8 16 Z'/><path d='M9.8 3.7 L13.1 7'/></svg><svg class='a' style='left:1094.8px;top:6.1px' width='17' height='17' viewBox='0 0 17 17' fill='none' stroke='#b9b9b9' stroke-width='1' stroke-linejoin='miter'><path d='M0.7 16.2 L0.9 12.1 L11.2 1.9 a1.5 1.5 0 0 1 2.1 0 L15 3.6 a1.5 1.5 0 0 1 0 2.1 L4.8 16 Z'/><path d='M9.8 3.7 L13.1 7'/></svg><svg class='a' style='left:1215.8px;top:6.1px' width='17' height='17' viewBox='0 0 17 17' fill='none' stroke='#b9b9b9' stroke-width='1' stroke-linejoin='miter'><path d='M0.7 16.2 L0.9 12.1 L11.2 1.9 a1.5 1.5 0 0 1 2.1 0 L15 3.6 a1.5 1.5 0 0 1 0 2.1 L4.8 16 Z'/><path d='M9.8 3.7 L13.1 7'/></svg><span class='n' style='right:1095.7px;letter-spacing:-0.3px'>15.00</span><span class='n' style='right:853.7px;letter-spacing:-0.3px'>25.00</span><span class='n' style='right:732.7px;letter-spacing:-0.3px'>25.00</span></div>
<div class='a row leaf' style='top:858.82px;width:471px;overflow:hidden'><span class='c' style='left:55.4px;letter-spacing:-0.63px'>RC_00006</span><span class='c' style='left:187.3px;letter-spacing:0.15px'>Commitment</span><span class='n' style='right:89.8px;letter-spacing:-0.3px'>40.00</span><span class='n' style='right:6.2px;letter-spacing:-0.3px'>40.00</span><svg class='a' style='left:307.6px;top:6.1px' width='17' height='17' viewBox='0 0 17 17' fill='none' stroke='#b9b9b9' stroke-width='1' stroke-linejoin='miter'><path d='M0.7 16.2 L0.9 12.1 L11.2 1.9 a1.5 1.5 0 0 1 2.1 0 L15 3.6 a1.5 1.5 0 0 1 0 2.1 L4.8 16 Z'/><path d='M9.8 3.7 L13.1 7'/></svg></div><div class='a row leaf' style='top:857.52px;left:471px;width:1333px;overflow:hidden'><svg class='a' style='left:5.8px;top:6.1px' width='17' height='17' viewBox='0 0 17 17' fill='none' stroke='#b9b9b9' stroke-width='1' stroke-linejoin='miter'><path d='M0.7 16.2 L0.9 12.1 L11.2 1.9 a1.5 1.5 0 0 1 2.1 0 L15 3.6 a1.5 1.5 0 0 1 0 2.1 L4.8 16 Z'/><path d='M9.8 3.7 L13.1 7'/></svg><svg class='a' style='left:126.8px;top:6.1px' width='17' height='17' viewBox='0 0 17 17' fill='none' stroke='#b9b9b9' stroke-width='1' stroke-linejoin='miter'><path d='M0.7 16.2 L0.9 12.1 L11.2 1.9 a1.5 1.5 0 0 1 2.1 0 L15 3.6 a1.5 1.5 0 0 1 0 2.1 L4.8 16 Z'/><path d='M9.8 3.7 L13.1 7'/></svg><svg class='a' style='left:247.8px;top:6.1px' width='17' height='17' viewBox='0 0 17 17' fill='none' stroke='#b9b9b9' stroke-width='1' stroke-linejoin='miter'><path d='M0.7 16.2 L0.9 12.1 L11.2 1.9 a1.5 1.5 0 0 1 2.1 0 L15 3.6 a1.5 1.5 0 0 1 0 2.1 L4.8 16 Z'/><path d='M9.8 3.7 L13.1 7'/></svg><svg class='a' style='left:368.8px;top:6.1px' width='17' height='17' viewBox='0 0 17 17' fill='none' stroke='#b9b9b9' stroke-width='1' stroke-linejoin='miter'><path d='M0.7 16.2 L0.9 12.1 L11.2 1.9 a1.5 1.5 0 0 1 2.1 0 L15 3.6 a1.5 1.5 0 0 1 0 2.1 L4.8 16 Z'/><path d='M9.8 3.7 L13.1 7'/></svg><svg class='a' style='left:489.8px;top:6.1px' width='17' height='17' viewBox='0 0 17 17' fill='none' stroke='#b9b9b9' stroke-width='1' stroke-linejoin='miter'><path d='M0.7 16.2 L0.9 12.1 L11.2 1.9 a1.5 1.5 0 0 1 2.1 0 L15 3.6 a1.5 1.5 0 0 1 0 2.1 L4.8 16 Z'/><path d='M9.8 3.7 L13.1 7'/></svg><svg class='a' style='left:610.8px;top:6.1px' width='17' height='17' viewBox='0 0 17 17' fill='none' stroke='#b9b9b9' stroke-width='1' stroke-linejoin='miter'><path d='M0.7 16.2 L0.9 12.1 L11.2 1.9 a1.5 1.5 0 0 1 2.1 0 L15 3.6 a1.5 1.5 0 0 1 0 2.1 L4.8 16 Z'/><path d='M9.8 3.7 L13.1 7'/></svg><svg class='a' style='left:731.8px;top:6.1px' width='17' height='17' viewBox='0 0 17 17' fill='none' stroke='#b9b9b9' stroke-width='1' stroke-linejoin='miter'><path d='M0.7 16.2 L0.9 12.1 L11.2 1.9 a1.5 1.5 0 0 1 2.1 0 L15 3.6 a1.5 1.5 0 0 1 0 2.1 L4.8 16 Z'/><path d='M9.8 3.7 L13.1 7'/></svg><svg class='a' style='left:852.8px;top:6.1px' width='17' height='17' viewBox='0 0 17 17' fill='none' stroke='#b9b9b9' stroke-width='1' stroke-linejoin='miter'><path d='M0.7 16.2 L0.9 12.1 L11.2 1.9 a1.5 1.5 0 0 1 2.1 0 L15 3.6 a1.5 1.5 0 0 1 0 2.1 L4.8 16 Z'/><path d='M9.8 3.7 L13.1 7'/></svg><svg class='a' style='left:973.8px;top:6.1px' width='17' height='17' viewBox='0 0 17 17' fill='none' stroke='#b9b9b9' stroke-width='1' stroke-linejoin='miter'><path d='M0.7 16.2 L0.9 12.1 L11.2 1.9 a1.5 1.5 0 0 1 2.1 0 L15 3.6 a1.5 1.5 0 0 1 0 2.1 L4.8 16 Z'/><path d='M9.8 3.7 L13.1 7'/></svg><svg class='a' style='left:1094.8px;top:6.1px' width='17' height='17' viewBox='0 0 17 17' fill='none' stroke='#b9b9b9' stroke-width='1' stroke-linejoin='miter'><path d='M0.7 16.2 L0.9 12.1 L11.2 1.9 a1.5 1.5 0 0 1 2.1 0 L15 3.6 a1.5 1.5 0 0 1 0 2.1 L4.8 16 Z'/><path d='M9.8 3.7 L13.1 7'/></svg><svg class='a' style='left:1215.8px;top:6.1px' width='17' height='17' viewBox='0 0 17 17' fill='none' stroke='#b9b9b9' stroke-width='1' stroke-linejoin='miter'><path d='M0.7 16.2 L0.9 12.1 L11.2 1.9 a1.5 1.5 0 0 1 2.1 0 L15 3.6 a1.5 1.5 0 0 1 0 2.1 L4.8 16 Z'/><path d='M9.8 3.7 L13.1 7'/></svg><span class='n' style='right:853.7px;letter-spacing:-0.3px'>26.67</span><span class='n' style='right:732.7px;letter-spacing:-0.3px'>13.33</span></div>
<div class='a row leaf' style='top:890.29px;width:471px;overflow:hidden'><span class='c' style='left:55.4px;letter-spacing:-0.63px'>RR_00010</span><span class='c' style='left:187.3px;letter-spacing:-0.14px'>Anfrage</span><span class='n' style='right:89.8px;letter-spacing:-0.3px'>15.00</span><span class='n' style='right:6.2px;letter-spacing:-0.3px'>15.00</span><svg class='a' style='left:307.6px;top:6.1px' width='17' height='17' viewBox='0 0 17 17' fill='none' stroke='#b9b9b9' stroke-width='1' stroke-linejoin='miter'><path d='M0.7 16.2 L0.9 12.1 L11.2 1.9 a1.5 1.5 0 0 1 2.1 0 L15 3.6 a1.5 1.5 0 0 1 0 2.1 L4.8 16 Z'/><path d='M9.8 3.7 L13.1 7'/></svg></div><div class='a row leaf' style='top:888.99px;left:471px;width:1333px;overflow:hidden'><svg class='a' style='left:5.8px;top:6.1px' width='17' height='17' viewBox='0 0 17 17' fill='none' stroke='#b9b9b9' stroke-width='1' stroke-linejoin='miter'><path d='M0.7 16.2 L0.9 12.1 L11.2 1.9 a1.5 1.5 0 0 1 2.1 0 L15 3.6 a1.5 1.5 0 0 1 0 2.1 L4.8 16 Z'/><path d='M9.8 3.7 L13.1 7'/></svg><svg class='a' style='left:126.8px;top:6.1px' width='17' height='17' viewBox='0 0 17 17' fill='none' stroke='#b9b9b9' stroke-width='1' stroke-linejoin='miter'><path d='M0.7 16.2 L0.9 12.1 L11.2 1.9 a1.5 1.5 0 0 1 2.1 0 L15 3.6 a1.5 1.5 0 0 1 0 2.1 L4.8 16 Z'/><path d='M9.8 3.7 L13.1 7'/></svg><svg class='a' style='left:247.8px;top:6.1px' width='17' height='17' viewBox='0 0 17 17' fill='none' stroke='#b9b9b9' stroke-width='1' stroke-linejoin='miter'><path d='M0.7 16.2 L0.9 12.1 L11.2 1.9 a1.5 1.5 0 0 1 2.1 0 L15 3.6 a1.5 1.5 0 0 1 0 2.1 L4.8 16 Z'/><path d='M9.8 3.7 L13.1 7'/></svg><svg class='a' style='left:368.8px;top:6.1px' width='17' height='17' viewBox='0 0 17 17' fill='none' stroke='#b9b9b9' stroke-width='1' stroke-linejoin='miter'><path d='M0.7 16.2 L0.9 12.1 L11.2 1.9 a1.5 1.5 0 0 1 2.1 0 L15 3.6 a1.5 1.5 0 0 1 0 2.1 L4.8 16 Z'/><path d='M9.8 3.7 L13.1 7'/></svg><svg class='a' style='left:489.8px;top:6.1px' width='17' height='17' viewBox='0 0 17 17' fill='none' stroke='#b9b9b9' stroke-width='1' stroke-linejoin='miter'><path d='M0.7 16.2 L0.9 12.1 L11.2 1.9 a1.5 1.5 0 0 1 2.1 0 L15 3.6 a1.5 1.5 0 0 1 0 2.1 L4.8 16 Z'/><path d='M9.8 3.7 L13.1 7'/></svg><svg class='a' style='left:610.8px;top:6.1px' width='17' height='17' viewBox='0 0 17 17' fill='none' stroke='#b9b9b9' stroke-width='1' stroke-linejoin='miter'><path d='M0.7 16.2 L0.9 12.1 L11.2 1.9 a1.5 1.5 0 0 1 2.1 0 L15 3.6 a1.5 1.5 0 0 1 0 2.1 L4.8 16 Z'/><path d='M9.8 3.7 L13.1 7'/></svg><svg class='a' style='left:731.8px;top:6.1px' width='17' height='17' viewBox='0 0 17 17' fill='none' stroke='#b9b9b9' stroke-width='1' stroke-linejoin='miter'><path d='M0.7 16.2 L0.9 12.1 L11.2 1.9 a1.5 1.5 0 0 1 2.1 0 L15 3.6 a1.5 1.5 0 0 1 0 2.1 L4.8 16 Z'/><path d='M9.8 3.7 L13.1 7'/></svg><svg class='a' style='left:852.8px;top:6.1px' width='17' height='17' viewBox='0 0 17 17' fill='none' stroke='#b9b9b9' stroke-width='1' stroke-linejoin='miter'><path d='M0.7 16.2 L0.9 12.1 L11.2 1.9 a1.5 1.5 0 0 1 2.1 0 L15 3.6 a1.5 1.5 0 0 1 0 2.1 L4.8 16 Z'/><path d='M9.8 3.7 L13.1 7'/></svg><svg class='a' style='left:973.8px;top:6.1px' width='17' height='17' viewBox='0 0 17 17' fill='none' stroke='#b9b9b9' stroke-width='1' stroke-linejoin='miter'><path d='M0.7 16.2 L0.9 12.1 L11.2 1.9 a1.5 1.5 0 0 1 2.1 0 L15 3.6 a1.5 1.5 0 0 1 0 2.1 L4.8 16 Z'/><path d='M9.8 3.7 L13.1 7'/></svg><svg class='a' style='left:1094.8px;top:6.1px' width='17' height='17' viewBox='0 0 17 17' fill='none' stroke='#b9b9b9' stroke-width='1' stroke-linejoin='miter'><path d='M0.7 16.2 L0.9 12.1 L11.2 1.9 a1.5 1.5 0 0 1 2.1 0 L15 3.6 a1.5 1.5 0 0 1 0 2.1 L4.8 16 Z'/><path d='M9.8 3.7 L13.1 7'/></svg><svg class='a' style='left:1215.8px;top:6.1px' width='17' height='17' viewBox='0 0 17 17' fill='none' stroke='#b9b9b9' stroke-width='1' stroke-linejoin='miter'><path d='M0.7 16.2 L0.9 12.1 L11.2 1.9 a1.5 1.5 0 0 1 2.1 0 L15 3.6 a1.5 1.5 0 0 1 0 2.1 L4.8 16 Z'/><path d='M9.8 3.7 L13.1 7'/></svg><span class='n' style='right:1095.7px;letter-spacing:-0.3px'>15.00</span></div>
<div class='a row leaf' style='top:921.76px;width:471px;overflow:hidden'><span class='c' style='left:55.4px;letter-spacing:-0.63px'>RR_00020</span><span class='c' style='left:187.3px;letter-spacing:-0.14px'>Anfrage</span><span class='n' style='right:89.8px;letter-spacing:-0.3px'>50.00</span><span class='n' style='right:6.2px;letter-spacing:-0.3px'>50.00</span><svg class='a' style='left:307.6px;top:6.1px' width='17' height='17' viewBox='0 0 17 17' fill='none' stroke='#b9b9b9' stroke-width='1' stroke-linejoin='miter'><path d='M0.7 16.2 L0.9 12.1 L11.2 1.9 a1.5 1.5 0 0 1 2.1 0 L15 3.6 a1.5 1.5 0 0 1 0 2.1 L4.8 16 Z'/><path d='M9.8 3.7 L13.1 7'/></svg></div><div class='a row leaf' style='top:920.46px;left:471px;width:1333px;overflow:hidden'><svg class='a' style='left:5.8px;top:6.1px' width='17' height='17' viewBox='0 0 17 17' fill='none' stroke='#b9b9b9' stroke-width='1' stroke-linejoin='miter'><path d='M0.7 16.2 L0.9 12.1 L11.2 1.9 a1.5 1.5 0 0 1 2.1 0 L15 3.6 a1.5 1.5 0 0 1 0 2.1 L4.8 16 Z'/><path d='M9.8 3.7 L13.1 7'/></svg><svg class='a' style='left:126.8px;top:6.1px' width='17' height='17' viewBox='0 0 17 17' fill='none' stroke='#b9b9b9' stroke-width='1' stroke-linejoin='miter'><path d='M0.7 16.2 L0.9 12.1 L11.2 1.9 a1.5 1.5 0 0 1 2.1 0 L15 3.6 a1.5 1.5 0 0 1 0 2.1 L4.8 16 Z'/><path d='M9.8 3.7 L13.1 7'/></svg><svg class='a' style='left:247.8px;top:6.1px' width='17' height='17' viewBox='0 0 17 17' fill='none' stroke='#b9b9b9' stroke-width='1' stroke-linejoin='miter'><path d='M0.7 16.2 L0.9 12.1 L11.2 1.9 a1.5 1.5 0 0 1 2.1 0 L15 3.6 a1.5 1.5 0 0 1 0 2.1 L4.8 16 Z'/><path d='M9.8 3.7 L13.1 7'/></svg><svg class='a' style='left:368.8px;top:6.1px' width='17' height='17' viewBox='0 0 17 17' fill='none' stroke='#b9b9b9' stroke-width='1' stroke-linejoin='miter'><path d='M0.7 16.2 L0.9 12.1 L11.2 1.9 a1.5 1.5 0 0 1 2.1 0 L15 3.6 a1.5 1.5 0 0 1 0 2.1 L4.8 16 Z'/><path d='M9.8 3.7 L13.1 7'/></svg><svg class='a' style='left:489.8px;top:6.1px' width='17' height='17' viewBox='0 0 17 17' fill='none' stroke='#b9b9b9' stroke-width='1' stroke-linejoin='miter'><path d='M0.7 16.2 L0.9 12.1 L11.2 1.9 a1.5 1.5 0 0 1 2.1 0 L15 3.6 a1.5 1.5 0 0 1 0 2.1 L4.8 16 Z'/><path d='M9.8 3.7 L13.1 7'/></svg><svg class='a' style='left:610.8px;top:6.1px' width='17' height='17' viewBox='0 0 17 17' fill='none' stroke='#b9b9b9' stroke-width='1' stroke-linejoin='miter'><path d='M0.7 16.2 L0.9 12.1 L11.2 1.9 a1.5 1.5 0 0 1 2.1 0 L15 3.6 a1.5 1.5 0 0 1 0 2.1 L4.8 16 Z'/><path d='M9.8 3.7 L13.1 7'/></svg><svg class='a' style='left:731.8px;top:6.1px' width='17' height='17' viewBox='0 0 17 17' fill='none' stroke='#b9b9b9' stroke-width='1' stroke-linejoin='miter'><path d='M0.7 16.2 L0.9 12.1 L11.2 1.9 a1.5 1.5 0 0 1 2.1 0 L15 3.6 a1.5 1.5 0 0 1 0 2.1 L4.8 16 Z'/><path d='M9.8 3.7 L13.1 7'/></svg><svg class='a' style='left:852.8px;top:6.1px' width='17' height='17' viewBox='0 0 17 17' fill='none' stroke='#b9b9b9' stroke-width='1' stroke-linejoin='miter'><path d='M0.7 16.2 L0.9 12.1 L11.2 1.9 a1.5 1.5 0 0 1 2.1 0 L15 3.6 a1.5 1.5 0 0 1 0 2.1 L4.8 16 Z'/><path d='M9.8 3.7 L13.1 7'/></svg><svg class='a' style='left:973.8px;top:6.1px' width='17' height='17' viewBox='0 0 17 17' fill='none' stroke='#b9b9b9' stroke-width='1' stroke-linejoin='miter'><path d='M0.7 16.2 L0.9 12.1 L11.2 1.9 a1.5 1.5 0 0 1 2.1 0 L15 3.6 a1.5 1.5 0 0 1 0 2.1 L4.8 16 Z'/><path d='M9.8 3.7 L13.1 7'/></svg><svg class='a' style='left:1094.8px;top:6.1px' width='17' height='17' viewBox='0 0 17 17' fill='none' stroke='#b9b9b9' stroke-width='1' stroke-linejoin='miter'><path d='M0.7 16.2 L0.9 12.1 L11.2 1.9 a1.5 1.5 0 0 1 2.1 0 L15 3.6 a1.5 1.5 0 0 1 0 2.1 L4.8 16 Z'/><path d='M9.8 3.7 L13.1 7'/></svg><svg class='a' style='left:1215.8px;top:6.1px' width='17' height='17' viewBox='0 0 17 17' fill='none' stroke='#b9b9b9' stroke-width='1' stroke-linejoin='miter'><path d='M0.7 16.2 L0.9 12.1 L11.2 1.9 a1.5 1.5 0 0 1 2.1 0 L15 3.6 a1.5 1.5 0 0 1 0 2.1 L4.8 16 Z'/><path d='M9.8 3.7 L13.1 7'/></svg><span class='n' style='right:853.7px;letter-spacing:-0.3px'>25.00</span><span class='n' style='right:732.7px;letter-spacing:-0.3px'>25.00</span></div>
<div class='a row b' style='top:953.23px;width:471px;overflow:hidden'><svg class='a' style='left:14.2px;top:8.6px' width='18' height='14' viewBox='0 0 18 14' fill='none' stroke='#111' stroke-width='1.5' stroke-linecap='round'><path d='M6.6 2.2 H16.4 M6.6 7.2 H16.4 M6.6 12.2 H16.4' stroke-linecap='butt'/><path d='M0.9 2.2 L2.2 3.6 L4.6 0.8 M0.9 7.2 L2.2 8.6 L4.6 5.8' stroke-width='1.3' stroke-linejoin='round'/><circle cx='2.6' cy='12.2' r='1.4' fill='#111' stroke='none'/></svg><span class='c' style='left:36.4px;letter-spacing:-0.44px'>Erstellung eine...</span><span class='a' style='left:164px;top:14.6px;width:12px;height:2.2px;background:#111'></span><span class='c' style='left:187.3px;letter-spacing:-0.54px'>Commitment</span><span class='n' style='right:89.8px;letter-spacing:0.01px'>10.00</span><span class='n' style='right:6.2px;letter-spacing:0.01px'>10.00</span><svg class='a' style='left:307.6px;top:6.1px' width='17' height='17' viewBox='0 0 17 17' fill='none' stroke='#b9b9b9' stroke-width='1' stroke-linejoin='miter'><path d='M0.7 16.2 L0.9 12.1 L11.2 1.9 a1.5 1.5 0 0 1 2.1 0 L15 3.6 a1.5 1.5 0 0 1 0 2.1 L4.8 16 Z'/><path d='M9.8 3.7 L13.1 7'/></svg></div><div class='a row b' style='top:951.93px;left:471px;width:1333px;overflow:hidden'><svg class='a' style='left:5.8px;top:6.1px' width='17' height='17' viewBox='0 0 17 17' fill='none' stroke='#b9b9b9' stroke-width='1' stroke-linejoin='miter'><path d='M0.7 16.2 L0.9 12.1 L11.2 1.9 a1.5 1.5 0 0 1 2.1 0 L15 3.6 a1.5 1.5 0 0 1 0 2.1 L4.8 16 Z'/><path d='M9.8 3.7 L13.1 7'/></svg><svg class='a' style='left:126.8px;top:6.1px' width='17' height='17' viewBox='0 0 17 17' fill='none' stroke='#b9b9b9' stroke-width='1' stroke-linejoin='miter'><path d='M0.7 16.2 L0.9 12.1 L11.2 1.9 a1.5 1.5 0 0 1 2.1 0 L15 3.6 a1.5 1.5 0 0 1 0 2.1 L4.8 16 Z'/><path d='M9.8 3.7 L13.1 7'/></svg><svg class='a' style='left:247.8px;top:6.1px' width='17' height='17' viewBox='0 0 17 17' fill='none' stroke='#b9b9b9' stroke-width='1' stroke-linejoin='miter'><path d='M0.7 16.2 L0.9 12.1 L11.2 1.9 a1.5 1.5 0 0 1 2.1 0 L15 3.6 a1.5 1.5 0 0 1 0 2.1 L4.8 16 Z'/><path d='M9.8 3.7 L13.1 7'/></svg><svg class='a' style='left:368.8px;top:6.1px' width='17' height='17' viewBox='0 0 17 17' fill='none' stroke='#b9b9b9' stroke-width='1' stroke-linejoin='miter'><path d='M0.7 16.2 L0.9 12.1 L11.2 1.9 a1.5 1.5 0 0 1 2.1 0 L15 3.6 a1.5 1.5 0 0 1 0 2.1 L4.8 16 Z'/><path d='M9.8 3.7 L13.1 7'/></svg><svg class='a' style='left:489.8px;top:6.1px' width='17' height='17' viewBox='0 0 17 17' fill='none' stroke='#b9b9b9' stroke-width='1' stroke-linejoin='miter'><path d='M0.7 16.2 L0.9 12.1 L11.2 1.9 a1.5 1.5 0 0 1 2.1 0 L15 3.6 a1.5 1.5 0 0 1 0 2.1 L4.8 16 Z'/><path d='M9.8 3.7 L13.1 7'/></svg><svg class='a' style='left:610.8px;top:6.1px' width='17' height='17' viewBox='0 0 17 17' fill='none' stroke='#b9b9b9' stroke-width='1' stroke-linejoin='miter'><path d='M0.7 16.2 L0.9 12.1 L11.2 1.9 a1.5 1.5 0 0 1 2.1 0 L15 3.6 a1.5 1.5 0 0 1 0 2.1 L4.8 16 Z'/><path d='M9.8 3.7 L13.1 7'/></svg><svg class='a' style='left:731.8px;top:6.1px' width='17' height='17' viewBox='0 0 17 17' fill='none' stroke='#b9b9b9' stroke-width='1' stroke-linejoin='miter'><path d='M0.7 16.2 L0.9 12.1 L11.2 1.9 a1.5 1.5 0 0 1 2.1 0 L15 3.6 a1.5 1.5 0 0 1 0 2.1 L4.8 16 Z'/><path d='M9.8 3.7 L13.1 7'/></svg><svg class='a' style='left:852.8px;top:6.1px' width='17' height='17' viewBox='0 0 17 17' fill='none' stroke='#b9b9b9' stroke-width='1' stroke-linejoin='miter'><path d='M0.7 16.2 L0.9 12.1 L11.2 1.9 a1.5 1.5 0 0 1 2.1 0 L15 3.6 a1.5 1.5 0 0 1 0 2.1 L4.8 16 Z'/><path d='M9.8 3.7 L13.1 7'/></svg><svg class='a' style='left:973.8px;top:6.1px' width='17' height='17' viewBox='0 0 17 17' fill='none' stroke='#b9b9b9' stroke-width='1' stroke-linejoin='miter'><path d='M0.7 16.2 L0.9 12.1 L11.2 1.9 a1.5 1.5 0 0 1 2.1 0 L15 3.6 a1.5 1.5 0 0 1 0 2.1 L4.8 16 Z'/><path d='M9.8 3.7 L13.1 7'/></svg><svg class='a' style='left:1094.8px;top:6.1px' width='17' height='17' viewBox='0 0 17 17' fill='none' stroke='#b9b9b9' stroke-width='1' stroke-linejoin='miter'><path d='M0.7 16.2 L0.9 12.1 L11.2 1.9 a1.5 1.5 0 0 1 2.1 0 L15 3.6 a1.5 1.5 0 0 1 0 2.1 L4.8 16 Z'/><path d='M9.8 3.7 L13.1 7'/></svg><svg class='a' style='left:1215.8px;top:6.1px' width='17' height='17' viewBox='0 0 17 17' fill='none' stroke='#b9b9b9' stroke-width='1' stroke-linejoin='miter'><path d='M0.7 16.2 L0.9 12.1 L11.2 1.9 a1.5 1.5 0 0 1 2.1 0 L15 3.6 a1.5 1.5 0 0 1 0 2.1 L4.8 16 Z'/><path d='M9.8 3.7 L13.1 7'/></svg><span class='n' style='right:732.7px;letter-spacing:0.01px'>6.00</span><span class='n' style='right:611.7px;letter-spacing:0.01px'>4.00</span></div>
<div class='a row b' style='top:984.7px;width:471px;overflow:hidden'><span class='c' style='left:187.3px;letter-spacing:-0.64px'>Anfrage</span><span class='n' style='right:89.8px;letter-spacing:0.01px'>10.00</span><span class='n' style='right:6.2px;letter-spacing:0.01px'>10.00</span><svg class='a' style='left:307.6px;top:6.1px' width='17' height='17' viewBox='0 0 17 17' fill='none' stroke='#b9b9b9' stroke-width='1' stroke-linejoin='miter'><path d='M0.7 16.2 L0.9 12.1 L11.2 1.9 a1.5 1.5 0 0 1 2.1 0 L15 3.6 a1.5 1.5 0 0 1 0 2.1 L4.8 16 Z'/><path d='M9.8 3.7 L13.1 7'/></svg></div><div class='a row b' style='top:983.4px;left:471px;width:1333px;overflow:hidden'><svg class='a' style='left:5.8px;top:6.1px' width='17' height='17' viewBox='0 0 17 17' fill='none' stroke='#b9b9b9' stroke-width='1' stroke-linejoin='miter'><path d='M0.7 16.2 L0.9 12.1 L11.2 1.9 a1.5 1.5 0 0 1 2.1 0 L15 3.6 a1.5 1.5 0 0 1 0 2.1 L4.8 16 Z'/><path d='M9.8 3.7 L13.1 7'/></svg><svg class='a' style='left:126.8px;top:6.1px' width='17' height='17' viewBox='0 0 17 17' fill='none' stroke='#b9b9b9' stroke-width='1' stroke-linejoin='miter'><path d='M0.7 16.2 L0.9 12.1 L11.2 1.9 a1.5 1.5 0 0 1 2.1 0 L15 3.6 a1.5 1.5 0 0 1 0 2.1 L4.8 16 Z'/><path d='M9.8 3.7 L13.1 7'/></svg><svg class='a' style='left:247.8px;top:6.1px' width='17' height='17' viewBox='0 0 17 17' fill='none' stroke='#b9b9b9' stroke-width='1' stroke-linejoin='miter'><path d='M0.7 16.2 L0.9 12.1 L11.2 1.9 a1.5 1.5 0 0 1 2.1 0 L15 3.6 a1.5 1.5 0 0 1 0 2.1 L4.8 16 Z'/><path d='M9.8 3.7 L13.1 7'/></svg><svg class='a' style='left:368.8px;top:6.1px' width='17' height='17' viewBox='0 0 17 17' fill='none' stroke='#b9b9b9' stroke-width='1' stroke-linejoin='miter'><path d='M0.7 16.2 L0.9 12.1 L11.2 1.9 a1.5 1.5 0 0 1 2.1 0 L15 3.6 a1.5 1.5 0 0 1 0 2.1 L4.8 16 Z'/><path d='M9.8 3.7 L13.1 7'/></svg><svg class='a' style='left:489.8px;top:6.1px' width='17' height='17' viewBox='0 0 17 17' fill='none' stroke='#b9b9b9' stroke-width='1' stroke-linejoin='miter'><path d='M0.7 16.2 L0.9 12.1 L11.2 1.9 a1.5 1.5 0 0 1 2.1 0 L15 3.6 a1.5 1.5 0 0 1 0 2.1 L4.8 16 Z'/><path d='M9.8 3.7 L13.1 7'/></svg><svg class='a' style='left:610.8px;top:6.1px' width='17' height='17' viewBox='0 0 17 17' fill='none' stroke='#b9b9b9' stroke-width='1' stroke-linejoin='miter'><path d='M0.7 16.2 L0.9 12.1 L11.2 1.9 a1.5 1.5 0 0 1 2.1 0 L15 3.6 a1.5 1.5 0 0 1 0 2.1 L4.8 16 Z'/><path d='M9.8 3.7 L13.1 7'/></svg><svg class='a' style='left:731.8px;top:6.1px' width='17' height='17' viewBox='0 0 17 17' fill='none' stroke='#b9b9b9' stroke-width='1' stroke-linejoin='miter'><path d='M0.7 16.2 L0.9 12.1 L11.2 1.9 a1.5 1.5 0 0 1 2.1 0 L15 3.6 a1.5 1.5 0 0 1 0 2.1 L4.8 16 Z'/><path d='M9.8 3.7 L13.1 7'/></svg><svg class='a' style='left:852.8px;top:6.1px' width='17' height='17' viewBox='0 0 17 17' fill='none' stroke='#b9b9b9' stroke-width='1' stroke-linejoin='miter'><path d='M0.7 16.2 L0.9 12.1 L11.2 1.9 a1.5 1.5 0 0 1 2.1 0 L15 3.6 a1.5 1.5 0 0 1 0 2.1 L4.8 16 Z'/><path d='M9.8 3.7 L13.1 7'/></svg><svg class='a' style='left:973.8px;top:6.1px' width='17' height='17' viewBox='0 0 17 17' fill='none' stroke='#b9b9b9' stroke-width='1' stroke-linejoin='miter'><path d='M0.7 16.2 L0.9 12.1 L11.2 1.9 a1.5 1.5 0 0 1 2.1 0 L15 3.6 a1.5 1.5 0 0 1 0 2.1 L4.8 16 Z'/><path d='M9.8 3.7 L13.1 7'/></svg><svg class='a' style='left:1094.8px;top:6.1px' width='17' height='17' viewBox='0 0 17 17' fill='none' stroke='#b9b9b9' stroke-width='1' stroke-linejoin='miter'><path d='M0.7 16.2 L0.9 12.1 L11.2 1.9 a1.5 1.5 0 0 1 2.1 0 L15 3.6 a1.5 1.5 0 0 1 0 2.1 L4.8 16 Z'/><path d='M9.8 3.7 L13.1 7'/></svg><svg class='a' style='left:1215.8px;top:6.1px' width='17' height='17' viewBox='0 0 17 17' fill='none' stroke='#b9b9b9' stroke-width='1' stroke-linejoin='miter'><path d='M0.7 16.2 L0.9 12.1 L11.2 1.9 a1.5 1.5 0 0 1 2.1 0 L15 3.6 a1.5 1.5 0 0 1 0 2.1 L4.8 16 Z'/><path d='M9.8 3.7 L13.1 7'/></svg><span class='n' style='right:732.7px;letter-spacing:0.01px'>6.00</span><span class='n' style='right:611.7px;letter-spacing:0.01px'>4.00</span></div>
<div class='a row ' style='top:1016.17px;width:471px;overflow:hidden'><svg class='a' style='left:33.2px;top:9px' width='15' height='14.4' viewBox='0 0 15 14.4' fill='none' stroke='#111' stroke-width='1.5' stroke-linejoin='round'><rect x='0.9' y='0.9' width='13.2' height='12.6' rx='2.2'/><path d='M3.4 4.4 H11.6 M3.4 7.6 H8' stroke-linecap='butt'/><path d='M10 7.4 L12.4 9.8 L10 12.2 L7.6 9.8 Z' fill='#111' stroke='none'/></svg><span class='c' style='left:54.6px;letter-spacing:-0.29px'>Schedule SP...</span><span class='a' style='left:164px;top:14.6px;width:12px;height:2.2px;background:#111'></span><span class='c' style='left:187.3px;letter-spacing:0.15px'>Commitment</span><span class='n' style='right:89.8px;letter-spacing:-0.3px'>10.00</span><span class='n' style='right:6.2px;letter-spacing:-0.3px'>10.00</span><svg class='a' style='left:307.6px;top:6.1px' width='17' height='17' viewBox='0 0 17 17' fill='none' stroke='#b9b9b9' stroke-width='1' stroke-linejoin='miter'><path d='M0.7 16.2 L0.9 12.1 L11.2 1.9 a1.5 1.5 0 0 1 2.1 0 L15 3.6 a1.5 1.5 0 0 1 0 2.1 L4.8 16 Z'/><path d='M9.8 3.7 L13.1 7'/></svg></div><div class='a row ' style='top:1014.87px;left:471px;width:1333px;overflow:hidden'><svg class='a' style='left:5.8px;top:6.1px' width='17' height='17' viewBox='0 0 17 17' fill='none' stroke='#b9b9b9' stroke-width='1' stroke-linejoin='miter'><path d='M0.7 16.2 L0.9 12.1 L11.2 1.9 a1.5 1.5 0 0 1 2.1 0 L15 3.6 a1.5 1.5 0 0 1 0 2.1 L4.8 16 Z'/><path d='M9.8 3.7 L13.1 7'/></svg><svg class='a' style='left:126.8px;top:6.1px' width='17' height='17' viewBox='0 0 17 17' fill='none' stroke='#b9b9b9' stroke-width='1' stroke-linejoin='miter'><path d='M0.7 16.2 L0.9 12.1 L11.2 1.9 a1.5 1.5 0 0 1 2.1 0 L15 3.6 a1.5 1.5 0 0 1 0 2.1 L4.8 16 Z'/><path d='M9.8 3.7 L13.1 7'/></svg><svg class='a' style='left:247.8px;top:6.1px' width='17' height='17' viewBox='0 0 17 17' fill='none' stroke='#b9b9b9' stroke-width='1' stroke-linejoin='miter'><path d='M0.7 16.2 L0.9 12.1 L11.2 1.9 a1.5 1.5 0 0 1 2.1 0 L15 3.6 a1.5 1.5 0 0 1 0 2.1 L4.8 16 Z'/><path d='M9.8 3.7 L13.1 7'/></svg><svg class='a' style='left:368.8px;top:6.1px' width='17' height='17' viewBox='0 0 17 17' fill='none' stroke='#b9b9b9' stroke-width='1' stroke-linejoin='miter'><path d='M0.7 16.2 L0.9 12.1 L11.2 1.9 a1.5 1.5 0 0 1 2.1 0 L15 3.6 a1.5 1.5 0 0 1 0 2.1 L4.8 16 Z'/><path d='M9.8 3.7 L13.1 7'/></svg><svg class='a' style='left:489.8px;top:6.1px' width='17' height='17' viewBox='0 0 17 17' fill='none' stroke='#b9b9b9' stroke-width='1' stroke-linejoin='miter'><path d='M0.7 16.2 L0.9 12.1 L11.2 1.9 a1.5 1.5 0 0 1 2.1 0 L15 3.6 a1.5 1.5 0 0 1 0 2.1 L4.8 16 Z'/><path d='M9.8 3.7 L13.1 7'/></svg><svg class='a' style='left:610.8px;top:6.1px' width='17' height='17' viewBox='0 0 17 17' fill='none' stroke='#b9b9b9' stroke-width='1' stroke-linejoin='miter'><path d='M0.7 16.2 L0.9 12.1 L11.2 1.9 a1.5 1.5 0 0 1 2.1 0 L15 3.6 a1.5 1.5 0 0 1 0 2.1 L4.8 16 Z'/><path d='M9.8 3.7 L13.1 7'/></svg><svg class='a' style='left:731.8px;top:6.1px' width='17' height='17' viewBox='0 0 17 17' fill='none' stroke='#b9b9b9' stroke-width='1' stroke-linejoin='miter'><path d='M0.7 16.2 L0.9 12.1 L11.2 1.9 a1.5 1.5 0 0 1 2.1 0 L15 3.6 a1.5 1.5 0 0 1 0 2.1 L4.8 16 Z'/><path d='M9.8 3.7 L13.1 7'/></svg><svg class='a' style='left:852.8px;top:6.1px' width='17' height='17' viewBox='0 0 17 17' fill='none' stroke='#b9b9b9' stroke-width='1' stroke-linejoin='miter'><path d='M0.7 16.2 L0.9 12.1 L11.2 1.9 a1.5 1.5 0 0 1 2.1 0 L15 3.6 a1.5 1.5 0 0 1 0 2.1 L4.8 16 Z'/><path d='M9.8 3.7 L13.1 7'/></svg><svg class='a' style='left:973.8px;top:6.1px' width='17' height='17' viewBox='0 0 17 17' fill='none' stroke='#b9b9b9' stroke-width='1' stroke-linejoin='miter'><path d='M0.7 16.2 L0.9 12.1 L11.2 1.9 a1.5 1.5 0 0 1 2.1 0 L15 3.6 a1.5 1.5 0 0 1 0 2.1 L4.8 16 Z'/><path d='M9.8 3.7 L13.1 7'/></svg><svg class='a' style='left:1094.8px;top:6.1px' width='17' height='17' viewBox='0 0 17 17' fill='none' stroke='#b9b9b9' stroke-width='1' stroke-linejoin='miter'><path d='M0.7 16.2 L0.9 12.1 L11.2 1.9 a1.5 1.5 0 0 1 2.1 0 L15 3.6 a1.5 1.5 0 0 1 0 2.1 L4.8 16 Z'/><path d='M9.8 3.7 L13.1 7'/></svg><svg class='a' style='left:1215.8px;top:6.1px' width='17' height='17' viewBox='0 0 17 17' fill='none' stroke='#b9b9b9' stroke-width='1' stroke-linejoin='miter'><path d='M0.7 16.2 L0.9 12.1 L11.2 1.9 a1.5 1.5 0 0 1 2.1 0 L15 3.6 a1.5 1.5 0 0 1 0 2.1 L4.8 16 Z'/><path d='M9.8 3.7 L13.1 7'/></svg><span class='n' style='right:732.7px;letter-spacing:-0.3px'>6.00</span><span class='n' style='right:611.7px;letter-spacing:-0.3px'>4.00</span></div>
<div class='a' style='left:13px;top:387px;width:1px;height:274px;background:#ababab;box-shadow:1px 0 0 #e2e2e2'></div>
<div class='a' style='left:13px;top:702px;width:1px;height:242px;background:#ababab;box-shadow:1px 0 0 #e2e2e2'></div>
<div class='a' style='left:13px;top:985px;width:1px;height:54px;background:#ababab;box-shadow:1px 0 0 #e2e2e2'></div>
<div class='a' style='left:13.4px;top:439px;width:11.2px;height:1px;background:#b2b2b2'></div>
<div class='a' style='left:13.4px;top:502px;width:23.4px;height:1px;background:#b2b2b2'></div>
<div class='a' style='left:13.4px;top:565px;width:35.6px;height:1px;background:#b2b2b2'></div>
<div class='a' style='left:13.4px;top:597px;width:35.6px;height:1px;background:#b2b2b2'></div>
<div class='a' style='left:13.4px;top:628px;width:35.6px;height:1px;background:#b2b2b2'></div>
<div class='a' style='left:13.4px;top:660px;width:35.6px;height:1px;background:#b2b2b2'></div>
<div class='a' style='left:13.4px;top:754px;width:11.2px;height:1px;background:#b2b2b2'></div>
<div class='a' style='left:13.4px;top:817px;width:23.4px;height:1px;background:#b2b2b2'></div>
<div class='a' style='left:13.4px;top:880px;width:35.6px;height:1px;background:#b2b2b2'></div>
<div class='a' style='left:13.4px;top:911px;width:35.6px;height:1px;background:#b2b2b2'></div>
<div class='a' style='left:13.4px;top:943px;width:35.6px;height:1px;background:#b2b2b2'></div>
<div class='a' style='left:13.4px;top:1037px;width:11.2px;height:1px;background:#b2b2b2'></div>
</div></div>
<div class='a vl' style='left:181px;top:293px;height:743px'></div>
<div class='a vl' style='left:302px;top:293px;height:743px'></div>
<div class='a vl' style='left:387px;top:293px;height:743px'></div>
<div class='a vl' style='left:593px;top:293px;height:743px'></div>
<div class='a vl' style='left:714px;top:293px;height:743px'></div>
<div class='a vl' style='left:835px;top:293px;height:743px'></div>
<div class='a vl' style='left:956px;top:293px;height:743px'></div>
<div class='a vl' style='left:1077px;top:293px;height:743px'></div>
<div class='a vl' style='left:1198px;top:293px;height:743px'></div>
<div class='a vl' style='left:1319px;top:293px;height:743px'></div>
<div class='a vl' style='left:1440px;top:293px;height:743px'></div>
<div class='a vl' style='left:1561px;top:293px;height:743px'></div>
<div class='a vl' style='left:1803px;top:50px;height:986px'></div>
<div class='a' style='left:470.2px;top:0;width:2.6px;height:1040px;background:#595959'></div>
<div class='a' style='left:1681px;top:0;width:2.2px;height:49.5px;background:#585858'></div>
<div class='a' style='left:1681px;top:293px;width:2.2px;height:746px;background:#595959'></div>
<div class='a' style='left:1833px;top:311.5px;width:5px;height:111px;background:#c9c9c9;border-radius:1px'></div>
</div><div class='a' style='left:0;top:0;right:0;bottom:0;border-radius:4px;box-shadow:inset 0 0 0 1px #e6e6e8;pointer-events:none'></div></div>
</body></html>
